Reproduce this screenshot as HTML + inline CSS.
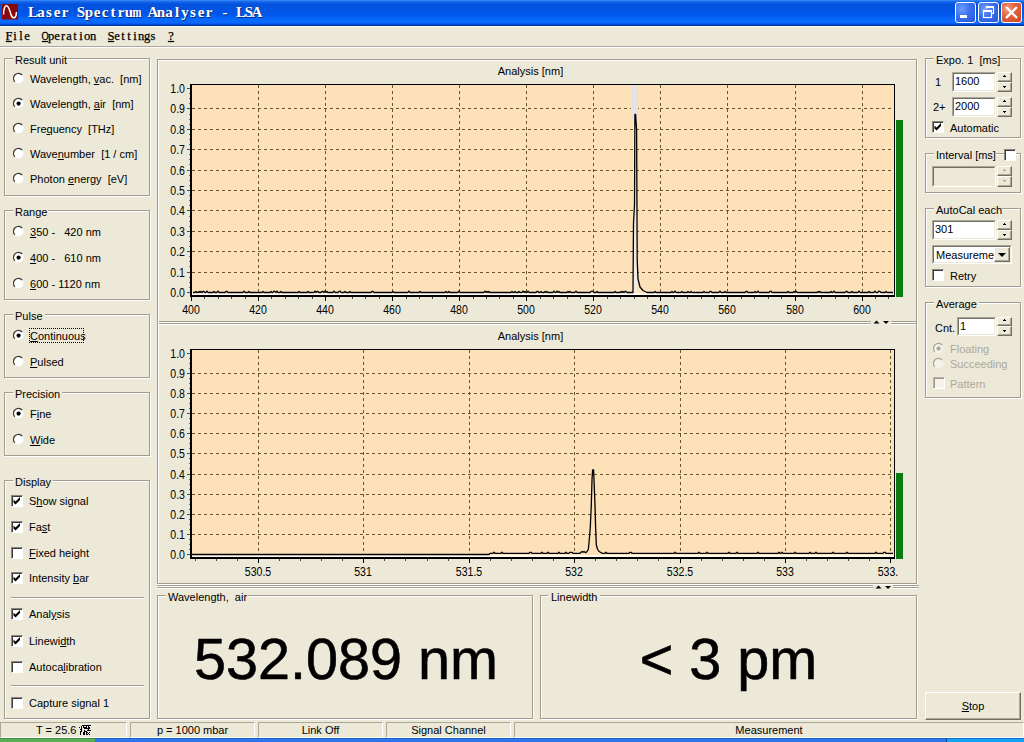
<!DOCTYPE html><html><head><meta charset="utf-8"><style>
html,body{margin:0;padding:0;width:1024px;height:742px;overflow:hidden;background:#ECE9D8;position:relative;font-family:"Liberation Sans",sans-serif}
</style></head><body>
<div style="position:absolute;left:0px;top:0px;width:1024px;height:26px;background:linear-gradient(to bottom,#3C8DF8 0px,#1A6AEF 1.5px,#0452DC 4px,#0054E3 10px,#0058EC 15px,#0868FC 19px,#0A6BFF 22px,#0858EC 24px,#003CB4 25px,#002C90 26px)"></div>
<div style="position:absolute;left:0px;top:26px;width:1024px;height:1px;background:#FBFBF6"></div>
<svg style="position:absolute;left:2px;top:4px" width="16" height="16" viewBox="0 0 16 16"><rect width="16" height="15.5" fill="#8a0a0c"/><path d="M1.6 10.5 C1.6 4, 3 1.8, 4.6 1.8 C6.5 1.8, 7.5 6, 8.8 10 C9.5 12.5, 10.5 14, 12 13.8 C13.6 13.5, 14.4 11, 14.4 8" fill="none" stroke="#fff" stroke-width="1.5"/></svg>
<svg style="position:absolute;left:0;top:0" width="300" height="26"><g font-family="Liberation Serif" font-weight="bold" font-size="15" text-anchor="middle"><text transform="translate(34 18) scale(1.0 1)" fill="#0a2a7a">L</text><text transform="translate(33 17) scale(1.0 1)" fill="#fff">L</text><text transform="translate(42 18) scale(1.0 1)" fill="#0a2a7a">a</text><text transform="translate(41 17) scale(1.0 1)" fill="#fff">a</text><text transform="translate(50 18) scale(1.0 1)" fill="#0a2a7a">s</text><text transform="translate(49 17) scale(1.0 1)" fill="#fff">s</text><text transform="translate(58 18) scale(1.0 1)" fill="#0a2a7a">e</text><text transform="translate(57 17) scale(1.0 1)" fill="#fff">e</text><text transform="translate(66 18) scale(1.0 1)" fill="#0a2a7a">r</text><text transform="translate(65 17) scale(1.0 1)" fill="#fff">r</text><text transform="translate(82 18) scale(1.0 1)" fill="#0a2a7a">S</text><text transform="translate(81 17) scale(1.0 1)" fill="#fff">S</text><text transform="translate(90 18) scale(1.0 1)" fill="#0a2a7a">p</text><text transform="translate(89 17) scale(1.0 1)" fill="#fff">p</text><text transform="translate(98 18) scale(1.0 1)" fill="#0a2a7a">e</text><text transform="translate(97 17) scale(1.0 1)" fill="#fff">e</text><text transform="translate(106 18) scale(1.0 1)" fill="#0a2a7a">c</text><text transform="translate(105 17) scale(1.0 1)" fill="#fff">c</text><text transform="translate(114 18) scale(1.0 1)" fill="#0a2a7a">t</text><text transform="translate(113 17) scale(1.0 1)" fill="#fff">t</text><text transform="translate(122 18) scale(1.0 1)" fill="#0a2a7a">r</text><text transform="translate(121 17) scale(1.0 1)" fill="#fff">r</text><text transform="translate(130 18) scale(1.0 1)" fill="#0a2a7a">u</text><text transform="translate(129 17) scale(1.0 1)" fill="#fff">u</text><text transform="translate(138 18) scale(0.72 1)" fill="#0a2a7a">m</text><text transform="translate(137 17) scale(0.72 1)" fill="#fff">m</text><text transform="translate(154 18) scale(1.0 1)" fill="#0a2a7a">A</text><text transform="translate(153 17) scale(1.0 1)" fill="#fff">A</text><text transform="translate(162 18) scale(1.0 1)" fill="#0a2a7a">n</text><text transform="translate(161 17) scale(1.0 1)" fill="#fff">n</text><text transform="translate(170 18) scale(1.0 1)" fill="#0a2a7a">a</text><text transform="translate(169 17) scale(1.0 1)" fill="#fff">a</text><text transform="translate(178 18) scale(1.0 1)" fill="#0a2a7a">l</text><text transform="translate(177 17) scale(1.0 1)" fill="#fff">l</text><text transform="translate(186 18) scale(1.0 1)" fill="#0a2a7a">y</text><text transform="translate(185 17) scale(1.0 1)" fill="#fff">y</text><text transform="translate(194 18) scale(1.0 1)" fill="#0a2a7a">s</text><text transform="translate(193 17) scale(1.0 1)" fill="#fff">s</text><text transform="translate(202 18) scale(1.0 1)" fill="#0a2a7a">e</text><text transform="translate(201 17) scale(1.0 1)" fill="#fff">e</text><text transform="translate(210 18) scale(1.0 1)" fill="#0a2a7a">r</text><text transform="translate(209 17) scale(1.0 1)" fill="#fff">r</text><text transform="translate(226 18) scale(1.0 1)" fill="#0a2a7a">-</text><text transform="translate(225 17) scale(1.0 1)" fill="#fff">-</text><text transform="translate(242 18) scale(1.0 1)" fill="#0a2a7a">L</text><text transform="translate(241 17) scale(1.0 1)" fill="#fff">L</text><text transform="translate(250 18) scale(1.0 1)" fill="#0a2a7a">S</text><text transform="translate(249 17) scale(1.0 1)" fill="#fff">S</text><text transform="translate(258 18) scale(1.0 1)" fill="#0a2a7a">A</text><text transform="translate(257 17) scale(1.0 1)" fill="#fff">A</text></g></svg>
<div style="position:absolute;left:955px;top:2px;width:21px;height:21px;box-sizing:border-box;border:1px solid #fff;border-radius:3px;background:radial-gradient(circle at 30% 30%,#6f9cf8 0%,#3a6ff0 45%,#2456d8 100%)"></div>
<div style="position:absolute;left:978px;top:2px;width:21px;height:21px;box-sizing:border-box;border:1px solid #fff;border-radius:3px;background:radial-gradient(circle at 30% 30%,#6f9cf8 0%,#3a6ff0 45%,#2456d8 100%)"></div>
<div style="position:absolute;left:1001px;top:2px;width:21px;height:21px;box-sizing:border-box;border:1px solid #fff;border-radius:3px;background:radial-gradient(circle at 30% 30%,#f29b7c 0%,#e0603c 45%,#cc4420 100%)"></div>
<svg style="position:absolute;left:955px;top:2px" width="21" height="21"><rect x="5" y="13" width="7" height="3" fill="#fff"/></svg>
<svg style="position:absolute;left:978px;top:2px" width="21" height="21"><rect x="5.5" y="8.5" width="8" height="7" fill="none" stroke="#fff" stroke-width="1.2"/><rect x="5" y="8" width="9" height="2" fill="#fff"/><path d="M8.5 6.5 V4.5 H15.5 V11.5 H13.5" fill="none" stroke="#fff" stroke-width="1.2"/><rect x="8" y="4" width="8" height="2" fill="#fff"/></svg>
<svg style="position:absolute;left:1001px;top:2px" width="21" height="21"><path d="M5 5 L16 16 M16 5 L5 16" stroke="#fff" stroke-width="2.4"/></svg>
<svg style="position:absolute;left:0;top:0" width="300" height="46"><g font-family="Liberation Serif" font-size="12.5" text-anchor="middle" fill="#000" stroke="#000" stroke-width="0.25"><text transform="translate(9 40) scale(1.0 1)">F</text><text transform="translate(15 40) scale(1.0 1)">i</text><text transform="translate(21 40) scale(1.0 1)">l</text><text transform="translate(27 40) scale(1.0 1)">e</text><rect x="6" y="41" width="6" height="1" fill="#000"/><text transform="translate(45 40) scale(0.8 1)">O</text><text transform="translate(51 40) scale(1.0 1)">p</text><text transform="translate(57 40) scale(1.0 1)">e</text><text transform="translate(63 40) scale(1.0 1)">r</text><text transform="translate(69 40) scale(1.0 1)">a</text><text transform="translate(75 40) scale(1.0 1)">t</text><text transform="translate(81 40) scale(1.0 1)">i</text><text transform="translate(87 40) scale(1.0 1)">o</text><text transform="translate(93 40) scale(1.0 1)">n</text><rect x="42" y="41" width="6" height="1" fill="#000"/><text transform="translate(111 40) scale(1.0 1)">S</text><text transform="translate(117 40) scale(1.0 1)">e</text><text transform="translate(123 40) scale(1.0 1)">t</text><text transform="translate(129 40) scale(1.0 1)">t</text><text transform="translate(135 40) scale(1.0 1)">i</text><text transform="translate(141 40) scale(1.0 1)">n</text><text transform="translate(147 40) scale(1.0 1)">g</text><text transform="translate(153 40) scale(1.0 1)">s</text><rect x="108" y="41" width="6" height="1" fill="#000"/><text transform="translate(171 40) scale(1.0 1)">?</text><rect x="168" y="41" width="6" height="1" fill="#000"/></g></svg>
<div style="position:absolute;left:0px;top:46px;width:1024px;height:1px;background:#aca899"></div>
<div style="position:absolute;left:0px;top:47px;width:1024px;height:1px;background:#fff"></div>
<div style="position:absolute;left:5px;top:59px;width:146px;height:138px;border:1px solid #fff;box-sizing:border-box"></div>
<div style="position:absolute;left:4px;top:58px;width:146px;height:138px;border:1px solid #A09D8E;box-sizing:border-box"></div>
<div style="position:absolute;left:13px;top:57px;width:55px;height:4px;background:#ECE9D8"></div>
<div style="position:absolute;left:15px;top:53px;font-size:11px;line-height:14px;font-family:'Liberation Sans', sans-serif;color:#000;white-space:pre;">Result unit</div>
<svg style="position:absolute;left:13px;top:72px" width="12" height="13" viewBox="0 0 12 13">
<circle cx="5.5" cy="6.5" r="5" fill="#fff"/>
<path d="M9.2 3.0 A5 5 0 0 0 1.8 9.9" fill="none" stroke="#3a3a3a" stroke-width="1.2"/>

</svg>
<div style="position:absolute;left:30px;top:72px;font-size:11px;line-height:14px;font-family:'Liberation Sans', sans-serif;color:#000;white-space:pre;">Wavelength, <u>v</u>ac.  [nm]</div>
<svg style="position:absolute;left:13px;top:97px" width="12" height="13" viewBox="0 0 12 13">
<circle cx="5.5" cy="6.5" r="5" fill="#fff"/>
<path d="M9.2 3.0 A5 5 0 0 0 1.8 9.9" fill="none" stroke="#3a3a3a" stroke-width="1.2"/>
<circle cx="5.6" cy="6.6" r="2.1" fill="#000"/>
</svg>
<div style="position:absolute;left:30px;top:97px;font-size:11px;line-height:14px;font-family:'Liberation Sans', sans-serif;color:#000;white-space:pre;">Wavelength, <u>a</u>ir  [nm]</div>
<svg style="position:absolute;left:13px;top:122px" width="12" height="13" viewBox="0 0 12 13">
<circle cx="5.5" cy="6.5" r="5" fill="#fff"/>
<path d="M9.2 3.0 A5 5 0 0 0 1.8 9.9" fill="none" stroke="#3a3a3a" stroke-width="1.2"/>

</svg>
<div style="position:absolute;left:30px;top:122px;font-size:11px;line-height:14px;font-family:'Liberation Sans', sans-serif;color:#000;white-space:pre;">Fre<u>q</u>uency  [THz]</div>
<svg style="position:absolute;left:13px;top:147px" width="12" height="13" viewBox="0 0 12 13">
<circle cx="5.5" cy="6.5" r="5" fill="#fff"/>
<path d="M9.2 3.0 A5 5 0 0 0 1.8 9.9" fill="none" stroke="#3a3a3a" stroke-width="1.2"/>

</svg>
<div style="position:absolute;left:30px;top:147px;font-size:11px;line-height:14px;font-family:'Liberation Sans', sans-serif;color:#000;white-space:pre;">Wave<u>n</u>umber  [1 / cm]</div>
<svg style="position:absolute;left:13px;top:172px" width="12" height="13" viewBox="0 0 12 13">
<circle cx="5.5" cy="6.5" r="5" fill="#fff"/>
<path d="M9.2 3.0 A5 5 0 0 0 1.8 9.9" fill="none" stroke="#3a3a3a" stroke-width="1.2"/>

</svg>
<div style="position:absolute;left:30px;top:172px;font-size:11px;line-height:14px;font-family:'Liberation Sans', sans-serif;color:#000;white-space:pre;">Photon <u>e</u>nergy  [eV]</div>
<div style="position:absolute;left:5px;top:211px;width:146px;height:90px;border:1px solid #fff;box-sizing:border-box"></div>
<div style="position:absolute;left:4px;top:210px;width:146px;height:90px;border:1px solid #A09D8E;box-sizing:border-box"></div>
<div style="position:absolute;left:13px;top:209px;width:35px;height:4px;background:#ECE9D8"></div>
<div style="position:absolute;left:15px;top:205px;font-size:11px;line-height:14px;font-family:'Liberation Sans', sans-serif;color:#000;white-space:pre;">Range</div>
<svg style="position:absolute;left:13px;top:225px" width="12" height="13" viewBox="0 0 12 13">
<circle cx="5.5" cy="6.5" r="5" fill="#fff"/>
<path d="M9.2 3.0 A5 5 0 0 0 1.8 9.9" fill="none" stroke="#3a3a3a" stroke-width="1.2"/>

</svg>
<div style="position:absolute;left:30px;top:225px;font-size:11px;line-height:14px;font-family:'Liberation Sans', sans-serif;color:#000;white-space:pre;"><u>3</u>50 -   420 nm</div>
<svg style="position:absolute;left:13px;top:251px" width="12" height="13" viewBox="0 0 12 13">
<circle cx="5.5" cy="6.5" r="5" fill="#fff"/>
<path d="M9.2 3.0 A5 5 0 0 0 1.8 9.9" fill="none" stroke="#3a3a3a" stroke-width="1.2"/>
<circle cx="5.6" cy="6.6" r="2.1" fill="#000"/>
</svg>
<div style="position:absolute;left:30px;top:251px;font-size:11px;line-height:14px;font-family:'Liberation Sans', sans-serif;color:#000;white-space:pre;"><u>4</u>00 -   610 nm</div>
<svg style="position:absolute;left:13px;top:277px" width="12" height="13" viewBox="0 0 12 13">
<circle cx="5.5" cy="6.5" r="5" fill="#fff"/>
<path d="M9.2 3.0 A5 5 0 0 0 1.8 9.9" fill="none" stroke="#3a3a3a" stroke-width="1.2"/>

</svg>
<div style="position:absolute;left:30px;top:277px;font-size:11px;line-height:14px;font-family:'Liberation Sans', sans-serif;color:#000;white-space:pre;"><u>6</u>00 - 1120 nm</div>
<div style="position:absolute;left:5px;top:315px;width:146px;height:64px;border:1px solid #fff;box-sizing:border-box"></div>
<div style="position:absolute;left:4px;top:314px;width:146px;height:64px;border:1px solid #A09D8E;box-sizing:border-box"></div>
<div style="position:absolute;left:13px;top:313px;width:32px;height:4px;background:#ECE9D8"></div>
<div style="position:absolute;left:15px;top:309px;font-size:11px;line-height:14px;font-family:'Liberation Sans', sans-serif;color:#000;white-space:pre;">Pulse</div>
<svg style="position:absolute;left:13px;top:329px" width="12" height="13" viewBox="0 0 12 13">
<circle cx="5.5" cy="6.5" r="5" fill="#fff"/>
<path d="M9.2 3.0 A5 5 0 0 0 1.8 9.9" fill="none" stroke="#3a3a3a" stroke-width="1.2"/>
<circle cx="5.6" cy="6.6" r="2.1" fill="#000"/>
</svg>
<div style="position:absolute;left:30px;top:329px;font-size:11px;line-height:14px;font-family:'Liberation Sans', sans-serif;color:#000;white-space:pre;"><u>C</u>ontinuous</div>
<div style="position:absolute;left:29px;top:328px;width:55px;height:15px;box-sizing:border-box;border:1px dotted #000"></div>
<svg style="position:absolute;left:13px;top:355px" width="12" height="13" viewBox="0 0 12 13">
<circle cx="5.5" cy="6.5" r="5" fill="#fff"/>
<path d="M9.2 3.0 A5 5 0 0 0 1.8 9.9" fill="none" stroke="#3a3a3a" stroke-width="1.2"/>

</svg>
<div style="position:absolute;left:30px;top:355px;font-size:11px;line-height:14px;font-family:'Liberation Sans', sans-serif;color:#000;white-space:pre;"><u>P</u>ulsed</div>
<div style="position:absolute;left:5px;top:393px;width:146px;height:64px;border:1px solid #fff;box-sizing:border-box"></div>
<div style="position:absolute;left:4px;top:392px;width:146px;height:64px;border:1px solid #A09D8E;box-sizing:border-box"></div>
<div style="position:absolute;left:13px;top:391px;width:49px;height:4px;background:#ECE9D8"></div>
<div style="position:absolute;left:15px;top:387px;font-size:11px;line-height:14px;font-family:'Liberation Sans', sans-serif;color:#000;white-space:pre;">Precision</div>
<svg style="position:absolute;left:13px;top:407px" width="12" height="13" viewBox="0 0 12 13">
<circle cx="5.5" cy="6.5" r="5" fill="#fff"/>
<path d="M9.2 3.0 A5 5 0 0 0 1.8 9.9" fill="none" stroke="#3a3a3a" stroke-width="1.2"/>
<circle cx="5.6" cy="6.6" r="2.1" fill="#000"/>
</svg>
<div style="position:absolute;left:30px;top:407px;font-size:11px;line-height:14px;font-family:'Liberation Sans', sans-serif;color:#000;white-space:pre;">F<u>i</u>ne</div>
<svg style="position:absolute;left:13px;top:433px" width="12" height="13" viewBox="0 0 12 13">
<circle cx="5.5" cy="6.5" r="5" fill="#fff"/>
<path d="M9.2 3.0 A5 5 0 0 0 1.8 9.9" fill="none" stroke="#3a3a3a" stroke-width="1.2"/>

</svg>
<div style="position:absolute;left:30px;top:433px;font-size:11px;line-height:14px;font-family:'Liberation Sans', sans-serif;color:#000;white-space:pre;"><u>W</u>ide</div>
<div style="position:absolute;left:5px;top:481px;width:146px;height:239px;border:1px solid #fff;box-sizing:border-box"></div>
<div style="position:absolute;left:4px;top:480px;width:146px;height:239px;border:1px solid #A09D8E;box-sizing:border-box"></div>
<div style="position:absolute;left:13px;top:479px;width:40px;height:4px;background:#ECE9D8"></div>
<div style="position:absolute;left:15px;top:475px;font-size:11px;line-height:14px;font-family:'Liberation Sans', sans-serif;color:#000;white-space:pre;">Display</div>
<div style="position:absolute;left:11px;top:495px;width:12px;height:12px;box-sizing:border-box;border-top:1px solid #8a877a;border-left:1px solid #8a877a;border-right:1px solid #fff;border-bottom:1px solid #fff"><div style="width:10px;height:10px;box-sizing:border-box;border-top:1px solid #3c3c3c;border-left:1px solid #3c3c3c;background:#fff"></div></div>
<svg style="position:absolute;left:11px;top:495px" width="12" height="12"><path d="M2.5 4.5 L4.5 6.5 L9 2 L9 5 L4.5 9.5 L2.5 7.5 Z" fill="#000"/></svg>
<div style="position:absolute;left:29px;top:494px;font-size:11px;line-height:14px;font-family:'Liberation Sans', sans-serif;color:#000;white-space:pre;">S<u>h</u>ow signal</div>
<div style="position:absolute;left:11px;top:521px;width:12px;height:12px;box-sizing:border-box;border-top:1px solid #8a877a;border-left:1px solid #8a877a;border-right:1px solid #fff;border-bottom:1px solid #fff"><div style="width:10px;height:10px;box-sizing:border-box;border-top:1px solid #3c3c3c;border-left:1px solid #3c3c3c;background:#fff"></div></div>
<svg style="position:absolute;left:11px;top:521px" width="12" height="12"><path d="M2.5 4.5 L4.5 6.5 L9 2 L9 5 L4.5 9.5 L2.5 7.5 Z" fill="#000"/></svg>
<div style="position:absolute;left:29px;top:520px;font-size:11px;line-height:14px;font-family:'Liberation Sans', sans-serif;color:#000;white-space:pre;">Fa<u>s</u>t</div>
<div style="position:absolute;left:11px;top:547px;width:12px;height:12px;box-sizing:border-box;border-top:1px solid #8a877a;border-left:1px solid #8a877a;border-right:1px solid #fff;border-bottom:1px solid #fff"><div style="width:10px;height:10px;box-sizing:border-box;border-top:1px solid #3c3c3c;border-left:1px solid #3c3c3c;background:#fff"></div></div>
<div style="position:absolute;left:29px;top:546px;font-size:11px;line-height:14px;font-family:'Liberation Sans', sans-serif;color:#000;white-space:pre;"><u>F</u>ixed height</div>
<div style="position:absolute;left:11px;top:572px;width:12px;height:12px;box-sizing:border-box;border-top:1px solid #8a877a;border-left:1px solid #8a877a;border-right:1px solid #fff;border-bottom:1px solid #fff"><div style="width:10px;height:10px;box-sizing:border-box;border-top:1px solid #3c3c3c;border-left:1px solid #3c3c3c;background:#fff"></div></div>
<svg style="position:absolute;left:11px;top:572px" width="12" height="12"><path d="M2.5 4.5 L4.5 6.5 L9 2 L9 5 L4.5 9.5 L2.5 7.5 Z" fill="#000"/></svg>
<div style="position:absolute;left:29px;top:571px;font-size:11px;line-height:14px;font-family:'Liberation Sans', sans-serif;color:#000;white-space:pre;">Intensity <u>b</u>ar</div>
<div style="position:absolute;left:11px;top:608px;width:12px;height:12px;box-sizing:border-box;border-top:1px solid #8a877a;border-left:1px solid #8a877a;border-right:1px solid #fff;border-bottom:1px solid #fff"><div style="width:10px;height:10px;box-sizing:border-box;border-top:1px solid #3c3c3c;border-left:1px solid #3c3c3c;background:#fff"></div></div>
<svg style="position:absolute;left:11px;top:608px" width="12" height="12"><path d="M2.5 4.5 L4.5 6.5 L9 2 L9 5 L4.5 9.5 L2.5 7.5 Z" fill="#000"/></svg>
<div style="position:absolute;left:29px;top:607px;font-size:11px;line-height:14px;font-family:'Liberation Sans', sans-serif;color:#000;white-space:pre;">Anal<u>y</u>sis</div>
<div style="position:absolute;left:11px;top:635px;width:12px;height:12px;box-sizing:border-box;border-top:1px solid #8a877a;border-left:1px solid #8a877a;border-right:1px solid #fff;border-bottom:1px solid #fff"><div style="width:10px;height:10px;box-sizing:border-box;border-top:1px solid #3c3c3c;border-left:1px solid #3c3c3c;background:#fff"></div></div>
<svg style="position:absolute;left:11px;top:635px" width="12" height="12"><path d="M2.5 4.5 L4.5 6.5 L9 2 L9 5 L4.5 9.5 L2.5 7.5 Z" fill="#000"/></svg>
<div style="position:absolute;left:29px;top:634px;font-size:11px;line-height:14px;font-family:'Liberation Sans', sans-serif;color:#000;white-space:pre;">Linewi<u>d</u>th</div>
<div style="position:absolute;left:11px;top:661px;width:12px;height:12px;box-sizing:border-box;border-top:1px solid #8a877a;border-left:1px solid #8a877a;border-right:1px solid #fff;border-bottom:1px solid #fff"><div style="width:10px;height:10px;box-sizing:border-box;border-top:1px solid #3c3c3c;border-left:1px solid #3c3c3c;background:#fff"></div></div>
<div style="position:absolute;left:29px;top:660px;font-size:11px;line-height:14px;font-family:'Liberation Sans', sans-serif;color:#000;white-space:pre;">Autoca<u>l</u>ibration</div>
<div style="position:absolute;left:11px;top:697px;width:12px;height:12px;box-sizing:border-box;border-top:1px solid #8a877a;border-left:1px solid #8a877a;border-right:1px solid #fff;border-bottom:1px solid #fff"><div style="width:10px;height:10px;box-sizing:border-box;border-top:1px solid #3c3c3c;border-left:1px solid #3c3c3c;background:#fff"></div></div>
<div style="position:absolute;left:29px;top:696px;font-size:11px;line-height:14px;font-family:'Liberation Sans', sans-serif;color:#000;white-space:pre;">Capture signal 1</div>
<div style="position:absolute;left:11px;top:597px;width:133px;height:1px;background:#A09D8E"></div>
<div style="position:absolute;left:11px;top:598px;width:133px;height:1px;background:#fff"></div>
<div style="position:absolute;left:11px;top:685px;width:133px;height:1px;background:#A09D8E"></div>
<div style="position:absolute;left:11px;top:686px;width:133px;height:1px;background:#fff"></div>
<div style="position:absolute;left:157px;top:59px;width:1px;height:525px;background:#A09D8E"></div>
<div style="position:absolute;left:157px;top:59px;width:760px;height:1px;background:#A09D8E"></div>
<div style="position:absolute;left:158px;top:60px;width:1px;height:523px;background:#fff"></div>
<div style="position:absolute;left:158px;top:60px;width:758px;height:1px;background:#fff"></div>
<div style="position:absolute;left:916px;top:59px;width:1px;height:525px;background:#A09D8E"></div>
<div style="position:absolute;left:917px;top:59px;width:1px;height:526px;background:#fff"></div>
<div style="position:absolute;left:159px;top:321px;width:712px;height:1px;background:#A09D8E"></div>
<div style="position:absolute;left:891px;top:321px;width:25px;height:1px;background:#A09D8E"></div>
<div style="position:absolute;left:159px;top:322px;width:712px;height:1px;background:#fff"></div>
<div style="position:absolute;left:891px;top:322px;width:25px;height:1px;background:#fff"></div>
<div style="position:absolute;left:159px;top:323px;width:712px;height:1px;background:#A09D8E"></div>
<div style="position:absolute;left:891px;top:323px;width:25px;height:1px;background:#A09D8E"></div>
<div style="position:absolute;left:159px;top:324px;width:712px;height:1px;background:#fff"></div>
<div style="position:absolute;left:891px;top:324px;width:25px;height:1px;background:#fff"></div>
<svg style="position:absolute;left:872px;top:319px" width="20" height="8"><path d="M1.5 4.5 L4.5 1.5 L7.5 4.5 Z" fill="#000"/><path d="M11 2 L17 2 L14 5 Z" fill="#000"/></svg>
<div style="position:absolute;left:157px;top:583px;width:759px;height:1px;background:#A09D8E"></div>
<div style="position:absolute;left:157px;top:584px;width:759px;height:1px;background:#fff"></div>
<div style="position:absolute;left:157px;top:585px;width:716px;height:1px;background:#A09D8E"></div>
<div style="position:absolute;left:893px;top:585px;width:26px;height:1px;background:#A09D8E"></div>
<div style="position:absolute;left:157px;top:586px;width:716px;height:1px;background:#fff"></div>
<div style="position:absolute;left:893px;top:586px;width:26px;height:1px;background:#fff"></div>
<div style="position:absolute;left:157px;top:587px;width:716px;height:1px;background:#A09D8E"></div>
<div style="position:absolute;left:893px;top:587px;width:26px;height:1px;background:#A09D8E"></div>
<div style="position:absolute;left:157px;top:588px;width:716px;height:1px;background:#fff"></div>
<div style="position:absolute;left:893px;top:588px;width:26px;height:1px;background:#fff"></div>
<svg style="position:absolute;left:874px;top:584px" width="20" height="8"><path d="M1.5 4.5 L4.5 1.5 L7.5 4.5 Z" fill="#000"/><path d="M11 2 L17 2 L14 5 Z" fill="#000"/></svg>
<svg style="position:absolute;left:0;top:0" width="1024" height="742"><rect x="190" y="84" width="705" height="211" fill="#FDE2B9"/><rect x="192" y="293" width="702" height="2" fill="#fffaf0"/><line x1="192" y1="272.5" x2="894" y2="272.5" stroke="#6a5436" stroke-width="1" stroke-dasharray="3 3"/><line x1="192" y1="251.5" x2="894" y2="251.5" stroke="#6a5436" stroke-width="1" stroke-dasharray="3 3"/><line x1="192" y1="231.5" x2="894" y2="231.5" stroke="#6a5436" stroke-width="1" stroke-dasharray="3 3"/><line x1="192" y1="210.5" x2="894" y2="210.5" stroke="#6a5436" stroke-width="1" stroke-dasharray="3 3"/><line x1="192" y1="190.5" x2="894" y2="190.5" stroke="#6a5436" stroke-width="1" stroke-dasharray="3 3"/><line x1="192" y1="170.5" x2="894" y2="170.5" stroke="#6a5436" stroke-width="1" stroke-dasharray="3 3"/><line x1="192" y1="149.5" x2="894" y2="149.5" stroke="#6a5436" stroke-width="1" stroke-dasharray="3 3"/><line x1="192" y1="129.5" x2="894" y2="129.5" stroke="#6a5436" stroke-width="1" stroke-dasharray="3 3"/><line x1="192" y1="108.5" x2="894" y2="108.5" stroke="#6a5436" stroke-width="1" stroke-dasharray="3 3"/><line x1="258.5" y1="85" x2="258.5" y2="292" stroke="#6a5436" stroke-width="1" stroke-dasharray="3 3"/><line x1="325.5" y1="85" x2="325.5" y2="292" stroke="#6a5436" stroke-width="1" stroke-dasharray="3 3"/><line x1="392.5" y1="85" x2="392.5" y2="292" stroke="#6a5436" stroke-width="1" stroke-dasharray="3 3"/><line x1="459.5" y1="85" x2="459.5" y2="292" stroke="#6a5436" stroke-width="1" stroke-dasharray="3 3"/><line x1="526.5" y1="85" x2="526.5" y2="292" stroke="#6a5436" stroke-width="1" stroke-dasharray="3 3"/><line x1="593.5" y1="85" x2="593.5" y2="292" stroke="#6a5436" stroke-width="1" stroke-dasharray="3 3"/><line x1="660.5" y1="85" x2="660.5" y2="292" stroke="#6a5436" stroke-width="1" stroke-dasharray="3 3"/><line x1="727.5" y1="85" x2="727.5" y2="292" stroke="#6a5436" stroke-width="1" stroke-dasharray="3 3"/><line x1="795.5" y1="85" x2="795.5" y2="292" stroke="#6a5436" stroke-width="1" stroke-dasharray="3 3"/><line x1="862.5" y1="85" x2="862.5" y2="292" stroke="#6a5436" stroke-width="1" stroke-dasharray="3 3"/><rect x="631" y="85" width="7" height="34" fill="#ece2d8"/><rect x="632" y="85" width="5" height="34" fill="#e4e0e2"/><rect x="633" y="85" width="3" height="34" fill="#e6e4ea"/><rect x="633" y="118" width="4" height="174" fill="#f2ebe6"/><path d="M193.0 292.5 L194.0 292.5 L195.0 292.5 L196.0 291.5 L197.0 292.5 L198.0 292.5 L199.0 291.5 L200.0 292.5 L201.0 291.5 L202.0 292.5 L203.0 291.5 L204.0 291.5 L205.0 292.5 L206.0 292.5 L207.0 291.0 L208.0 292.5 L209.0 292.5 L210.0 292.5 L211.0 292.5 L212.0 292.5 L213.0 292.5 L214.0 291.5 L215.0 292.5 L216.0 292.5 L217.0 292.5 L218.0 291.0 L219.0 292.5 L220.0 292.5 L221.0 292.5 L222.0 292.5 L223.0 292.5 L224.0 292.5 L225.0 292.5 L226.0 291.5 L227.0 291.5 L228.0 292.5 L229.0 292.5 L230.0 292.5 L231.0 292.5 L232.0 292.5 L233.0 292.5 L234.0 292.5 L235.0 292.5 L236.0 292.5 L237.0 292.5 L238.0 292.5 L239.0 292.5 L240.0 292.5 L241.0 292.5 L242.0 292.5 L243.0 292.5 L244.0 291.0 L245.0 292.5 L246.0 292.5 L247.0 292.5 L248.0 292.5 L249.0 291.5 L250.0 292.5 L251.0 292.5 L252.0 292.5 L253.0 292.5 L254.0 292.5 L255.0 292.5 L256.0 292.5 L257.0 292.5 L258.0 292.5 L259.0 292.5 L260.0 292.5 L261.0 292.5 L262.0 292.5 L263.0 291.5 L264.0 292.5 L265.0 292.5 L266.0 292.5 L267.0 292.5 L268.0 292.5 L269.0 292.5 L270.0 292.5 L271.0 291.5 L272.0 292.5 L273.0 292.5 L274.0 291.0 L275.0 291.5 L276.0 292.5 L277.0 291.0 L278.0 292.5 L279.0 292.5 L280.0 292.5 L281.0 291.5 L282.0 292.5 L283.0 292.5 L284.0 292.5 L285.0 292.5 L286.0 292.5 L287.0 292.5 L288.0 292.5 L289.0 292.5 L290.0 292.5 L291.0 292.5 L292.0 292.5 L293.0 292.5 L294.0 292.5 L295.0 292.5 L296.0 292.5 L297.0 292.5 L298.0 292.5 L299.0 291.5 L300.0 292.5 L301.0 292.5 L302.0 292.5 L303.0 292.5 L304.0 292.5 L305.0 292.5 L306.0 292.5 L307.0 292.5 L308.0 291.5 L309.0 292.5 L310.0 292.5 L311.0 292.5 L312.0 292.5 L313.0 292.5 L314.0 292.5 L315.0 291.0 L316.0 292.5 L317.0 291.5 L318.0 291.5 L319.0 292.5 L320.0 292.5 L321.0 292.5 L322.0 291.5 L323.0 291.5 L324.0 292.5 L325.0 291.0 L326.0 292.5 L327.0 291.5 L328.0 292.5 L329.0 292.5 L330.0 292.5 L331.0 292.5 L332.0 292.5 L333.0 292.5 L334.0 291.0 L335.0 292.5 L336.0 292.5 L337.0 292.5 L338.0 292.5 L339.0 291.5 L340.0 291.0 L341.0 292.5 L342.0 292.5 L343.0 292.5 L344.0 292.5 L345.0 291.5 L346.0 292.5 L347.0 292.5 L348.0 292.5 L349.0 292.5 L350.0 291.5 L351.0 292.5 L352.0 292.5 L353.0 292.5 L354.0 292.5 L355.0 292.5 L356.0 292.5 L357.0 292.5 L358.0 292.5 L359.0 292.5 L360.0 292.5 L361.0 292.5 L362.0 292.5 L363.0 292.5 L364.0 292.5 L365.0 292.5 L366.0 292.5 L367.0 292.5 L368.0 292.5 L369.0 292.5 L370.0 292.5 L371.0 292.5 L372.0 291.5 L373.0 291.5 L374.0 292.5 L375.0 292.5 L376.0 292.5 L377.0 292.5 L378.0 292.5 L379.0 292.5 L380.0 292.5 L381.0 292.5 L382.0 292.5 L383.0 292.5 L384.0 292.5 L385.0 292.5 L386.0 292.5 L387.0 292.5 L388.0 292.5 L389.0 292.5 L390.0 292.5 L391.0 292.5 L392.0 292.5 L393.0 291.5 L394.0 292.5 L395.0 292.5 L396.0 292.5 L397.0 292.5 L398.0 292.5 L399.0 292.5 L400.0 292.5 L401.0 292.5 L402.0 292.5 L403.0 292.5 L404.0 292.5 L405.0 292.5 L406.0 292.5 L407.0 292.5 L408.0 292.5 L409.0 291.0 L410.0 292.5 L411.0 292.5 L412.0 292.5 L413.0 292.5 L414.0 292.5 L415.0 292.5 L416.0 292.5 L417.0 292.5 L418.0 292.5 L419.0 292.5 L420.0 291.5 L421.0 292.5 L422.0 292.5 L423.0 292.5 L424.0 292.5 L425.0 292.5 L426.0 292.5 L427.0 292.5 L428.0 292.5 L429.0 292.5 L430.0 292.5 L431.0 292.5 L432.0 292.5 L433.0 292.5 L434.0 292.5 L435.0 292.5 L436.0 292.5 L437.0 292.5 L438.0 292.5 L439.0 292.5 L440.0 292.5 L441.0 292.5 L442.0 292.5 L443.0 292.5 L444.0 292.5 L445.0 292.5 L446.0 291.5 L447.0 292.5 L448.0 292.5 L449.0 291.5 L450.0 292.5 L451.0 292.5 L452.0 292.5 L453.0 292.5 L454.0 292.5 L455.0 292.5 L456.0 292.5 L457.0 292.5 L458.0 292.5 L459.0 291.0 L460.0 292.5 L461.0 292.5 L462.0 292.5 L463.0 292.5 L464.0 292.5 L465.0 292.5 L466.0 292.5 L467.0 292.5 L468.0 292.5 L469.0 292.5 L470.0 292.5 L471.0 292.5 L472.0 292.5 L473.0 292.5 L474.0 292.5 L475.0 292.5 L476.0 292.5 L477.0 292.5 L478.0 292.5 L479.0 292.5 L480.0 292.5 L481.0 292.5 L482.0 292.5 L483.0 292.5 L484.0 292.5 L485.0 291.0 L486.0 292.5 L487.0 291.5 L488.0 292.5 L489.0 291.5 L490.0 292.5 L491.0 292.5 L492.0 292.5 L493.0 292.5 L494.0 292.5 L495.0 292.5 L496.0 292.5 L497.0 292.5 L498.0 292.5 L499.0 292.5 L500.0 292.5 L501.0 292.5 L502.0 292.5 L503.0 292.5 L504.0 292.5 L505.0 292.5 L506.0 292.5 L507.0 292.5 L508.0 292.5 L509.0 292.5 L510.0 292.5 L511.0 292.5 L512.0 291.5 L513.0 292.5 L514.0 292.5 L515.0 291.5 L516.0 292.5 L517.0 292.5 L518.0 292.5 L519.0 291.5 L520.0 292.5 L521.0 292.5 L522.0 292.5 L523.0 291.0 L524.0 292.5 L525.0 291.5 L526.0 292.5 L527.0 292.5 L528.0 291.0 L529.0 292.5 L530.0 292.5 L531.0 292.5 L532.0 292.5 L533.0 292.5 L534.0 292.5 L535.0 292.5 L536.0 292.5 L537.0 291.5 L538.0 291.5 L539.0 292.5 L540.0 292.5 L541.0 291.5 L542.0 292.5 L543.0 292.5 L544.0 292.5 L545.0 291.5 L546.0 292.5 L547.0 291.5 L548.0 292.5 L549.0 292.5 L550.0 292.5 L551.0 292.5 L552.0 292.5 L553.0 292.5 L554.0 291.0 L555.0 292.5 L556.0 292.5 L557.0 291.0 L558.0 292.5 L559.0 291.5 L560.0 292.5 L561.0 292.5 L562.0 292.5 L563.0 292.5 L564.0 292.5 L565.0 292.5 L566.0 292.5 L567.0 292.5 L568.0 291.5 L569.0 292.5 L570.0 291.5 L571.0 292.5 L572.0 292.5 L573.0 292.5 L574.0 292.5 L575.0 292.5 L576.0 291.0 L577.0 292.5 L578.0 292.5 L579.0 292.5 L580.0 292.5 L581.0 292.5 L582.0 292.5 L583.0 292.5 L584.0 292.5 L585.0 292.5 L586.0 292.5 L587.0 292.5 L588.0 292.5 L589.0 292.5 L590.0 292.5 L591.0 291.5 L592.0 291.0 L593.0 291.5 L594.0 292.5 L595.0 292.5 L596.0 292.5 L597.0 291.5 L598.0 292.5 L599.0 292.5 L600.0 292.5 L601.0 292.5 L602.0 292.5 L603.0 292.5 L604.0 292.5 L605.0 292.5 L606.0 292.5 L607.0 292.5 L608.0 292.5 L609.0 292.5 L610.0 292.5 L611.0 292.5 L612.0 292.5 L613.0 292.5 L614.0 292.5 L615.0 291.5 L616.0 292.5 L617.0 292.5 L618.0 292.5 L619.0 292.5 L620.0 292.5 L621.0 291.5 L622.0 292.5 L623.0 291.5 L624.0 292.5 L625.0 291.5 L626.0 291.5 L627.0 292.5 L628.0 292.5 L629.0 292.5 L630.0 292.5 L631.0 292.5 L632.0 292.5 L633.0 292.5 L633.5 223.0 L634.5 205.0 L634.9 114.5 L635.6 114.5 L636.6 130.0 L637.2 260.0 L638.0 279.0 L640.0 287.0 L643.0 290.5 L646.0 292.0 L647.0 292.5 L648.0 292.5 L649.0 292.5 L650.0 292.5 L651.0 292.5 L652.0 292.5 L653.0 292.5 L654.0 292.5 L655.0 291.5 L656.0 292.5 L657.0 292.5 L658.0 292.5 L659.0 292.5 L660.0 292.5 L661.0 292.5 L662.0 292.5 L663.0 292.5 L664.0 292.5 L665.0 292.5 L666.0 292.5 L667.0 292.5 L668.0 292.5 L669.0 292.5 L670.0 292.5 L671.0 292.5 L672.0 291.5 L673.0 292.5 L674.0 292.5 L675.0 291.0 L676.0 292.5 L677.0 292.5 L678.0 292.5 L679.0 292.5 L680.0 292.5 L681.0 292.5 L682.0 291.5 L683.0 292.5 L684.0 292.5 L685.0 292.5 L686.0 292.5 L687.0 292.5 L688.0 291.5 L689.0 292.5 L690.0 292.5 L691.0 291.5 L692.0 292.5 L693.0 292.5 L694.0 292.5 L695.0 292.5 L696.0 292.5 L697.0 292.5 L698.0 292.5 L699.0 292.5 L700.0 292.5 L701.0 292.5 L702.0 292.5 L703.0 292.5 L704.0 291.5 L705.0 292.5 L706.0 292.5 L707.0 292.5 L708.0 292.5 L709.0 292.5 L710.0 291.5 L711.0 291.5 L712.0 292.5 L713.0 292.5 L714.0 292.5 L715.0 292.5 L716.0 292.5 L717.0 292.5 L718.0 292.5 L719.0 292.5 L720.0 291.0 L721.0 292.5 L722.0 292.5 L723.0 292.5 L724.0 292.5 L725.0 291.5 L726.0 292.5 L727.0 292.5 L728.0 292.5 L729.0 292.5 L730.0 292.5 L731.0 292.5 L732.0 292.5 L733.0 292.5 L734.0 292.5 L735.0 292.5 L736.0 292.5 L737.0 292.5 L738.0 292.5 L739.0 292.5 L740.0 292.5 L741.0 292.5 L742.0 292.5 L743.0 292.5 L744.0 292.5 L745.0 292.5 L746.0 291.5 L747.0 291.5 L748.0 292.5 L749.0 292.5 L750.0 292.5 L751.0 292.5 L752.0 292.5 L753.0 292.5 L754.0 292.5 L755.0 291.5 L756.0 292.5 L757.0 292.5 L758.0 291.0 L759.0 292.5 L760.0 292.5 L761.0 292.5 L762.0 292.5 L763.0 292.5 L764.0 292.5 L765.0 292.5 L766.0 292.5 L767.0 292.5 L768.0 292.5 L769.0 292.5 L770.0 291.5 L771.0 291.0 L772.0 292.5 L773.0 292.5 L774.0 292.5 L775.0 292.5 L776.0 292.5 L777.0 292.5 L778.0 292.5 L779.0 292.5 L780.0 292.5 L781.0 292.5 L782.0 292.5 L783.0 292.5 L784.0 292.5 L785.0 292.5 L786.0 292.5 L787.0 292.5 L788.0 291.5 L789.0 292.5 L790.0 292.5 L791.0 292.5 L792.0 292.5 L793.0 292.5 L794.0 291.5 L795.0 292.5 L796.0 291.0 L797.0 292.5 L798.0 292.5 L799.0 292.5 L800.0 292.5 L801.0 292.5 L802.0 292.5 L803.0 292.5 L804.0 292.5 L805.0 292.5 L806.0 292.5 L807.0 292.5 L808.0 292.5 L809.0 292.5 L810.0 292.5 L811.0 292.5 L812.0 292.5 L813.0 292.5 L814.0 292.5 L815.0 292.5 L816.0 292.5 L817.0 292.5 L818.0 291.5 L819.0 292.5 L820.0 291.5 L821.0 292.5 L822.0 292.5 L823.0 292.5 L824.0 292.5 L825.0 292.5 L826.0 292.5 L827.0 292.5 L828.0 292.5 L829.0 292.5 L830.0 292.5 L831.0 291.5 L832.0 292.5 L833.0 292.5 L834.0 291.0 L835.0 292.5 L836.0 292.5 L837.0 292.5 L838.0 292.5 L839.0 292.5 L840.0 292.5 L841.0 292.5 L842.0 292.5 L843.0 292.5 L844.0 292.5 L845.0 292.5 L846.0 291.5 L847.0 291.5 L848.0 292.5 L849.0 292.5 L850.0 292.5 L851.0 292.5 L852.0 291.5 L853.0 292.5 L854.0 292.5 L855.0 292.5 L856.0 292.5 L857.0 292.5 L858.0 292.5 L859.0 291.0 L860.0 292.5 L861.0 292.5 L862.0 292.5 L863.0 292.5 L864.0 292.5 L865.0 292.5 L866.0 292.5 L867.0 292.5 L868.0 292.5 L869.0 291.5 L870.0 292.5 L871.0 292.5 L872.0 292.5 L873.0 292.5 L874.0 292.5 L875.0 291.0 L876.0 292.5 L877.0 292.5 L878.0 292.5 L879.0 291.0 L880.0 291.5 L881.0 292.5 L882.0 292.5 L883.0 292.5 L884.0 292.5 L885.0 292.5 L886.0 291.5 L887.0 292.5 L888.0 292.5 L889.0 292.5 L890.0 292.5 L891.0 292.5 L892.0 292.5 L893.0 292.5" fill="none" stroke="#000" stroke-width="1.3" stroke-linejoin="round"/><rect x="190" y="84" width="705" height="1" fill="#000"/><rect x="894" y="84" width="1" height="211" fill="#000"/><rect x="190" y="84" width="2" height="213" fill="#000"/><rect x="190" y="295" width="705" height="2" fill="#000"/><rect x="187" y="292" width="3" height="1" fill="#444"/><rect x="187" y="272" width="3" height="1" fill="#444"/><rect x="187" y="251" width="3" height="1" fill="#444"/><rect x="187" y="231" width="3" height="1" fill="#444"/><rect x="187" y="210" width="3" height="1" fill="#444"/><rect x="187" y="190" width="3" height="1" fill="#444"/><rect x="187" y="170" width="3" height="1" fill="#444"/><rect x="187" y="149" width="3" height="1" fill="#444"/><rect x="187" y="129" width="3" height="1" fill="#444"/><rect x="187" y="108" width="3" height="1" fill="#444"/><rect x="187" y="88" width="3" height="1" fill="#444"/><rect x="189" y="292" width="1" height="1" fill="#666"/><rect x="189" y="287" width="1" height="1" fill="#666"/><rect x="189" y="282" width="1" height="1" fill="#666"/><rect x="189" y="277" width="1" height="1" fill="#666"/><rect x="189" y="272" width="1" height="1" fill="#666"/><rect x="189" y="266" width="1" height="1" fill="#666"/><rect x="189" y="261" width="1" height="1" fill="#666"/><rect x="189" y="256" width="1" height="1" fill="#666"/><rect x="189" y="251" width="1" height="1" fill="#666"/><rect x="189" y="246" width="1" height="1" fill="#666"/><rect x="189" y="241" width="1" height="1" fill="#666"/><rect x="189" y="236" width="1" height="1" fill="#666"/><rect x="189" y="231" width="1" height="1" fill="#666"/><rect x="189" y="226" width="1" height="1" fill="#666"/><rect x="189" y="221" width="1" height="1" fill="#666"/><rect x="189" y="216" width="1" height="1" fill="#666"/><rect x="189" y="210" width="1" height="1" fill="#666"/><rect x="189" y="205" width="1" height="1" fill="#666"/><rect x="189" y="200" width="1" height="1" fill="#666"/><rect x="189" y="195" width="1" height="1" fill="#666"/><rect x="189" y="190" width="1" height="1" fill="#666"/><rect x="189" y="185" width="1" height="1" fill="#666"/><rect x="189" y="180" width="1" height="1" fill="#666"/><rect x="189" y="175" width="1" height="1" fill="#666"/><rect x="189" y="170" width="1" height="1" fill="#666"/><rect x="189" y="164" width="1" height="1" fill="#666"/><rect x="189" y="159" width="1" height="1" fill="#666"/><rect x="189" y="154" width="1" height="1" fill="#666"/><rect x="189" y="149" width="1" height="1" fill="#666"/><rect x="189" y="144" width="1" height="1" fill="#666"/><rect x="189" y="139" width="1" height="1" fill="#666"/><rect x="189" y="134" width="1" height="1" fill="#666"/><rect x="189" y="129" width="1" height="1" fill="#666"/><rect x="189" y="124" width="1" height="1" fill="#666"/><rect x="189" y="119" width="1" height="1" fill="#666"/><rect x="189" y="114" width="1" height="1" fill="#666"/><rect x="189" y="108" width="1" height="1" fill="#666"/><rect x="189" y="103" width="1" height="1" fill="#666"/><rect x="189" y="98" width="1" height="1" fill="#666"/><rect x="189" y="93" width="1" height="1" fill="#666"/><rect x="189" y="88" width="1" height="1" fill="#666"/><rect x="191" y="297" width="1" height="2" fill="#444"/><rect x="204" y="297" width="1" height="2" fill="#444"/><rect x="218" y="297" width="1" height="2" fill="#444"/><rect x="231" y="297" width="1" height="2" fill="#444"/><rect x="245" y="297" width="1" height="2" fill="#444"/><rect x="258" y="297" width="1" height="2" fill="#444"/><rect x="271" y="297" width="1" height="2" fill="#444"/><rect x="285" y="297" width="1" height="2" fill="#444"/><rect x="298" y="297" width="1" height="2" fill="#444"/><rect x="312" y="297" width="1" height="2" fill="#444"/><rect x="325" y="297" width="1" height="2" fill="#444"/><rect x="339" y="297" width="1" height="2" fill="#444"/><rect x="352" y="297" width="1" height="2" fill="#444"/><rect x="365" y="297" width="1" height="2" fill="#444"/><rect x="379" y="297" width="1" height="2" fill="#444"/><rect x="392" y="297" width="1" height="2" fill="#444"/><rect x="406" y="297" width="1" height="2" fill="#444"/><rect x="419" y="297" width="1" height="2" fill="#444"/><rect x="432" y="297" width="1" height="2" fill="#444"/><rect x="446" y="297" width="1" height="2" fill="#444"/><rect x="459" y="297" width="1" height="2" fill="#444"/><rect x="473" y="297" width="1" height="2" fill="#444"/><rect x="486" y="297" width="1" height="2" fill="#444"/><rect x="499" y="297" width="1" height="2" fill="#444"/><rect x="513" y="297" width="1" height="2" fill="#444"/><rect x="526" y="297" width="1" height="2" fill="#444"/><rect x="540" y="297" width="1" height="2" fill="#444"/><rect x="553" y="297" width="1" height="2" fill="#444"/><rect x="567" y="297" width="1" height="2" fill="#444"/><rect x="580" y="297" width="1" height="2" fill="#444"/><rect x="593" y="297" width="1" height="2" fill="#444"/><rect x="607" y="297" width="1" height="2" fill="#444"/><rect x="620" y="297" width="1" height="2" fill="#444"/><rect x="634" y="297" width="1" height="2" fill="#444"/><rect x="647" y="297" width="1" height="2" fill="#444"/><rect x="660" y="297" width="1" height="2" fill="#444"/><rect x="674" y="297" width="1" height="2" fill="#444"/><rect x="687" y="297" width="1" height="2" fill="#444"/><rect x="701" y="297" width="1" height="2" fill="#444"/><rect x="714" y="297" width="1" height="2" fill="#444"/><rect x="727" y="297" width="1" height="2" fill="#444"/><rect x="741" y="297" width="1" height="2" fill="#444"/><rect x="754" y="297" width="1" height="2" fill="#444"/><rect x="768" y="297" width="1" height="2" fill="#444"/><rect x="781" y="297" width="1" height="2" fill="#444"/><rect x="795" y="297" width="1" height="2" fill="#444"/><rect x="808" y="297" width="1" height="2" fill="#444"/><rect x="821" y="297" width="1" height="2" fill="#444"/><rect x="835" y="297" width="1" height="2" fill="#444"/><rect x="848" y="297" width="1" height="2" fill="#444"/><rect x="862" y="297" width="1" height="2" fill="#444"/><rect x="875" y="297" width="1" height="2" fill="#444"/><rect x="888" y="297" width="1" height="2" fill="#444"/><rect x="191" y="297" width="1" height="4" fill="#000"/><rect x="258" y="297" width="1" height="4" fill="#000"/><rect x="325" y="297" width="1" height="4" fill="#000"/><rect x="392" y="297" width="1" height="4" fill="#000"/><rect x="459" y="297" width="1" height="4" fill="#000"/><rect x="526" y="297" width="1" height="4" fill="#000"/><rect x="593" y="297" width="1" height="4" fill="#000"/><rect x="660" y="297" width="1" height="4" fill="#000"/><rect x="727" y="297" width="1" height="4" fill="#000"/><rect x="795" y="297" width="1" height="4" fill="#000"/><rect x="862" y="297" width="1" height="4" fill="#000"/><rect x="896" y="120" width="7" height="177" fill="#0a7a12"/></svg>
<div style="position:absolute;left:-15px;top:286px;width:200px;text-align:right;font-size:12px;line-height:15px;color:#000;white-space:pre;transform:scaleX(0.88);transform-origin:100% 50%">0.0</div>
<div style="position:absolute;left:-15px;top:266px;width:200px;text-align:right;font-size:12px;line-height:15px;color:#000;white-space:pre;transform:scaleX(0.88);transform-origin:100% 50%">0.1</div>
<div style="position:absolute;left:-15px;top:245px;width:200px;text-align:right;font-size:12px;line-height:15px;color:#000;white-space:pre;transform:scaleX(0.88);transform-origin:100% 50%">0.2</div>
<div style="position:absolute;left:-15px;top:225px;width:200px;text-align:right;font-size:12px;line-height:15px;color:#000;white-space:pre;transform:scaleX(0.88);transform-origin:100% 50%">0.3</div>
<div style="position:absolute;left:-15px;top:204px;width:200px;text-align:right;font-size:12px;line-height:15px;color:#000;white-space:pre;transform:scaleX(0.88);transform-origin:100% 50%">0.4</div>
<div style="position:absolute;left:-15px;top:184px;width:200px;text-align:right;font-size:12px;line-height:15px;color:#000;white-space:pre;transform:scaleX(0.88);transform-origin:100% 50%">0.5</div>
<div style="position:absolute;left:-15px;top:164px;width:200px;text-align:right;font-size:12px;line-height:15px;color:#000;white-space:pre;transform:scaleX(0.88);transform-origin:100% 50%">0.6</div>
<div style="position:absolute;left:-15px;top:143px;width:200px;text-align:right;font-size:12px;line-height:15px;color:#000;white-space:pre;transform:scaleX(0.88);transform-origin:100% 50%">0.7</div>
<div style="position:absolute;left:-15px;top:123px;width:200px;text-align:right;font-size:12px;line-height:15px;color:#000;white-space:pre;transform:scaleX(0.88);transform-origin:100% 50%">0.8</div>
<div style="position:absolute;left:-15px;top:102px;width:200px;text-align:right;font-size:12px;line-height:15px;color:#000;white-space:pre;transform:scaleX(0.88);transform-origin:100% 50%">0.9</div>
<div style="position:absolute;left:-15px;top:82px;width:200px;text-align:right;font-size:12px;line-height:15px;color:#000;white-space:pre;transform:scaleX(0.88);transform-origin:100% 50%">1.0</div>
<div style="position:absolute;left:91.0px;top:303px;width:200px;text-align:center;font-size:12px;line-height:15px;color:#000;white-space:pre;transform:scaleX(0.88);transform-origin:50% 50%">400</div>
<div style="position:absolute;left:158.06px;top:303px;width:200px;text-align:center;font-size:12px;line-height:15px;color:#000;white-space:pre;transform:scaleX(0.88);transform-origin:50% 50%">420</div>
<div style="position:absolute;left:225.12px;top:303px;width:200px;text-align:center;font-size:12px;line-height:15px;color:#000;white-space:pre;transform:scaleX(0.88);transform-origin:50% 50%">440</div>
<div style="position:absolute;left:292.18px;top:303px;width:200px;text-align:center;font-size:12px;line-height:15px;color:#000;white-space:pre;transform:scaleX(0.88);transform-origin:50% 50%">460</div>
<div style="position:absolute;left:359.24px;top:303px;width:200px;text-align:center;font-size:12px;line-height:15px;color:#000;white-space:pre;transform:scaleX(0.88);transform-origin:50% 50%">480</div>
<div style="position:absolute;left:426.29999999999995px;top:303px;width:200px;text-align:center;font-size:12px;line-height:15px;color:#000;white-space:pre;transform:scaleX(0.88);transform-origin:50% 50%">500</div>
<div style="position:absolute;left:493.36px;top:303px;width:200px;text-align:center;font-size:12px;line-height:15px;color:#000;white-space:pre;transform:scaleX(0.88);transform-origin:50% 50%">520</div>
<div style="position:absolute;left:560.4200000000001px;top:303px;width:200px;text-align:center;font-size:12px;line-height:15px;color:#000;white-space:pre;transform:scaleX(0.88);transform-origin:50% 50%">540</div>
<div style="position:absolute;left:627.48px;top:303px;width:200px;text-align:center;font-size:12px;line-height:15px;color:#000;white-space:pre;transform:scaleX(0.88);transform-origin:50% 50%">560</div>
<div style="position:absolute;left:694.5400000000001px;top:303px;width:200px;text-align:center;font-size:12px;line-height:15px;color:#000;white-space:pre;transform:scaleX(0.88);transform-origin:50% 50%">580</div>
<div style="position:absolute;left:761.6px;top:303px;width:200px;text-align:center;font-size:12px;line-height:15px;color:#000;white-space:pre;transform:scaleX(0.88);transform-origin:50% 50%">600</div>
<div style="position:absolute;left:430.5px;top:64px;width:200px;text-align:center;font-size:11px;line-height:14px;color:#000;white-space:pre;">Analysis [nm]</div>
<svg style="position:absolute;left:0;top:0" width="1024" height="742"><rect x="190" y="349" width="705" height="208" fill="#FDE2B9"/><rect x="192" y="555" width="702" height="2" fill="#fffaf0"/><line x1="192" y1="534.5" x2="894" y2="534.5" stroke="#6a5436" stroke-width="1" stroke-dasharray="3 3"/><line x1="192" y1="514.5" x2="894" y2="514.5" stroke="#6a5436" stroke-width="1" stroke-dasharray="3 3"/><line x1="192" y1="494.5" x2="894" y2="494.5" stroke="#6a5436" stroke-width="1" stroke-dasharray="3 3"/><line x1="192" y1="474.5" x2="894" y2="474.5" stroke="#6a5436" stroke-width="1" stroke-dasharray="3 3"/><line x1="192" y1="453.5" x2="894" y2="453.5" stroke="#6a5436" stroke-width="1" stroke-dasharray="3 3"/><line x1="192" y1="433.5" x2="894" y2="433.5" stroke="#6a5436" stroke-width="1" stroke-dasharray="3 3"/><line x1="192" y1="413.5" x2="894" y2="413.5" stroke="#6a5436" stroke-width="1" stroke-dasharray="3 3"/><line x1="192" y1="393.5" x2="894" y2="393.5" stroke="#6a5436" stroke-width="1" stroke-dasharray="3 3"/><line x1="192" y1="373.5" x2="894" y2="373.5" stroke="#6a5436" stroke-width="1" stroke-dasharray="3 3"/><line x1="258.5" y1="350" x2="258.5" y2="554" stroke="#6a5436" stroke-width="1" stroke-dasharray="3 3"/><line x1="363.5" y1="350" x2="363.5" y2="554" stroke="#6a5436" stroke-width="1" stroke-dasharray="3 3"/><line x1="469.5" y1="350" x2="469.5" y2="554" stroke="#6a5436" stroke-width="1" stroke-dasharray="3 3"/><line x1="574.5" y1="350" x2="574.5" y2="554" stroke="#6a5436" stroke-width="1" stroke-dasharray="3 3"/><line x1="680.5" y1="350" x2="680.5" y2="554" stroke="#6a5436" stroke-width="1" stroke-dasharray="3 3"/><line x1="785.5" y1="350" x2="785.5" y2="554" stroke="#6a5436" stroke-width="1" stroke-dasharray="3 3"/><line x1="890.5" y1="350" x2="890.5" y2="554" stroke="#6a5436" stroke-width="1" stroke-dasharray="3 3"/><path d="M192.0 554.5 L193.0 554.5 L194.0 554.5 L195.0 554.5 L196.0 554.5 L197.0 554.5 L198.0 554.5 L199.0 554.5 L200.0 554.5 L201.0 554.5 L202.0 554.5 L203.0 554.5 L204.0 554.5 L205.0 554.5 L206.0 554.5 L207.0 554.5 L208.0 554.5 L209.0 554.5 L210.0 554.5 L211.0 554.5 L212.0 554.5 L213.0 554.5 L214.0 554.5 L215.0 554.5 L216.0 554.5 L217.0 554.5 L218.0 554.5 L219.0 554.5 L220.0 554.5 L221.0 554.5 L222.0 554.5 L223.0 554.5 L224.0 554.5 L225.0 554.5 L226.0 554.5 L227.0 554.5 L228.0 554.5 L229.0 554.5 L230.0 554.5 L231.0 554.5 L232.0 554.5 L233.0 554.5 L234.0 554.5 L235.0 554.5 L236.0 554.5 L237.0 554.5 L238.0 554.5 L239.0 554.5 L240.0 554.5 L241.0 554.5 L242.0 554.5 L243.0 554.5 L244.0 554.5 L245.0 554.5 L246.0 554.5 L247.0 554.5 L248.0 554.5 L249.0 554.5 L250.0 554.5 L251.0 554.5 L252.0 554.5 L253.0 554.5 L254.0 554.5 L255.0 554.5 L256.0 554.5 L257.0 554.5 L258.0 554.5 L259.0 554.5 L260.0 554.5 L261.0 554.5 L262.0 554.5 L263.0 554.5 L264.0 554.5 L265.0 554.5 L266.0 554.5 L267.0 554.5 L268.0 554.5 L269.0 554.5 L270.0 554.5 L271.0 554.5 L272.0 554.5 L273.0 554.5 L274.0 554.5 L275.0 554.5 L276.0 554.5 L277.0 554.5 L278.0 554.5 L279.0 554.5 L280.0 554.5 L281.0 554.5 L282.0 554.5 L283.0 554.5 L284.0 554.5 L285.0 554.5 L286.0 554.5 L287.0 554.5 L288.0 554.5 L289.0 554.5 L290.0 554.5 L291.0 554.5 L292.0 554.5 L293.0 554.5 L294.0 554.5 L295.0 554.5 L296.0 554.5 L297.0 554.5 L298.0 554.5 L299.0 554.5 L300.0 554.5 L301.0 554.5 L302.0 554.5 L303.0 554.5 L304.0 554.5 L305.0 554.5 L306.0 554.5 L307.0 554.5 L308.0 554.5 L309.0 554.5 L310.0 554.5 L311.0 554.5 L312.0 554.5 L313.0 554.5 L314.0 554.5 L315.0 554.5 L316.0 554.5 L317.0 554.5 L318.0 554.5 L319.0 554.5 L320.0 554.5 L321.0 554.5 L322.0 554.5 L323.0 554.5 L324.0 554.5 L325.0 554.5 L326.0 554.5 L327.0 554.5 L328.0 554.5 L329.0 554.5 L330.0 554.5 L331.0 554.5 L332.0 554.5 L333.0 554.5 L334.0 554.5 L335.0 554.5 L336.0 554.5 L337.0 554.5 L338.0 554.5 L339.0 554.5 L340.0 554.5 L341.0 554.5 L342.0 554.5 L343.0 554.5 L344.0 554.5 L345.0 554.5 L346.0 554.5 L347.0 554.5 L348.0 554.5 L349.0 554.5 L350.0 554.5 L351.0 554.5 L352.0 554.5 L353.0 554.5 L354.0 554.5 L355.0 554.5 L356.0 554.5 L357.0 554.5 L358.0 554.5 L359.0 554.5 L360.0 554.5 L361.0 554.5 L362.0 554.5 L363.0 554.5 L364.0 554.5 L365.0 554.5 L366.0 554.5 L367.0 554.5 L368.0 554.5 L369.0 554.5 L370.0 554.5 L371.0 554.5 L372.0 554.5 L373.0 554.5 L374.0 554.5 L375.0 554.5 L376.0 554.5 L377.0 554.5 L378.0 554.5 L379.0 554.5 L380.0 554.5 L381.0 554.5 L382.0 554.5 L383.0 554.5 L384.0 554.5 L385.0 554.5 L386.0 554.5 L387.0 554.5 L388.0 554.5 L389.0 554.5 L390.0 554.5 L391.0 554.5 L392.0 554.5 L393.0 554.5 L394.0 554.5 L395.0 554.5 L396.0 554.5 L397.0 554.5 L398.0 554.5 L399.0 554.5 L400.0 554.5 L401.0 554.5 L402.0 554.5 L403.0 554.5 L404.0 554.5 L405.0 554.5 L406.0 554.5 L407.0 554.5 L408.0 554.5 L409.0 554.5 L410.0 554.5 L411.0 554.5 L412.0 554.5 L413.0 554.5 L414.0 554.5 L415.0 554.5 L416.0 554.5 L417.0 554.5 L418.0 554.5 L419.0 554.5 L420.0 554.5 L421.0 554.5 L422.0 554.5 L423.0 554.5 L424.0 554.5 L425.0 554.5 L426.0 554.5 L427.0 554.5 L428.0 554.5 L429.0 554.5 L430.0 554.5 L431.0 554.5 L432.0 554.5 L433.0 554.5 L434.0 554.5 L435.0 554.5 L436.0 554.5 L437.0 554.5 L438.0 554.5 L439.0 554.5 L440.0 554.5 L441.0 554.5 L442.0 554.5 L443.0 554.5 L444.0 554.5 L445.0 554.5 L446.0 554.5 L447.0 554.5 L448.0 554.5 L449.0 554.5 L450.0 554.5 L451.0 554.5 L452.0 554.5 L453.0 554.5 L454.0 554.5 L455.0 554.5 L456.0 554.5 L457.0 554.5 L458.0 554.5 L459.0 554.5 L460.0 554.5 L461.0 554.5 L462.0 554.5 L463.0 554.5 L464.0 554.5 L465.0 554.5 L466.0 554.5 L467.0 554.5 L468.0 554.5 L469.0 554.5 L470.0 554.5 L471.0 554.5 L472.0 554.5 L473.0 554.5 L474.0 554.5 L475.0 554.5 L476.0 554.5 L477.0 554.5 L478.0 554.5 L479.0 554.5 L480.0 554.5 L481.0 554.5 L482.0 554.5 L483.0 554.5 L484.0 554.5 L485.0 554.5 L486.0 554.5 L487.0 554.5 L488.0 554.5 L489.0 554.5 L490.0 553.3 L491.0 553.3 L492.0 553.3 L493.0 553.3 L494.0 552.3 L495.0 553.3 L496.0 553.3 L497.0 553.3 L498.0 553.3 L499.0 553.3 L500.0 553.3 L501.0 553.3 L502.0 552.3 L503.0 553.3 L504.0 553.3 L505.0 553.3 L506.0 553.3 L507.0 553.3 L508.0 553.3 L509.0 553.3 L510.0 553.3 L511.0 553.3 L512.0 553.3 L513.0 553.3 L514.0 553.3 L515.0 553.3 L516.0 553.3 L517.0 553.3 L518.0 553.3 L519.0 553.3 L520.0 553.3 L521.0 553.3 L522.0 553.3 L523.0 553.3 L524.0 553.3 L525.0 553.3 L526.0 553.3 L527.0 553.3 L528.0 553.3 L529.0 553.3 L530.0 552.3 L531.0 552.3 L532.0 553.3 L533.0 553.3 L534.0 553.3 L535.0 553.3 L536.0 553.3 L537.0 553.3 L538.0 553.3 L539.0 553.3 L540.0 553.3 L541.0 553.3 L542.0 552.3 L543.0 553.3 L544.0 553.3 L545.0 553.3 L546.0 553.3 L547.0 553.3 L548.0 552.3 L549.0 553.3 L550.0 553.3 L551.0 553.3 L552.0 553.3 L553.0 553.3 L554.0 553.3 L555.0 553.3 L556.0 553.3 L557.0 553.3 L558.0 553.3 L559.0 552.3 L560.0 553.3 L561.0 553.3 L562.0 553.3 L563.0 553.3 L564.0 553.3 L565.0 553.3 L566.0 552.3 L567.0 553.3 L568.0 553.3 L569.0 553.3 L570.0 552.3 L571.0 552.3 L572.0 552.3 L573.0 553.3 L574.0 553.3 L575.0 553.3 L576.0 553.3 L577.0 553.3 L578.0 553.3 L579.0 553.3 L580.0 553.3 L581.0 552.3 L582.0 551.5 L583.0 552.3 L584.0 551.5 L585.0 552.3 L586.0 552.5 L587.0 551.5 L588.3 549.5 L589.0 543.0 L590.3 527.0 L591.3 505.0 L592.0 480.0 L592.6 470.0 L593.6 470.0 L594.2 485.0 L595.0 505.0 L595.6 527.0 L596.3 545.0 L597.5 549.0 L599.0 551.5 L601.0 552.5 L602.0 553.3 L603.0 553.3 L604.0 553.3 L605.0 553.3 L606.0 552.3 L607.0 553.3 L608.0 553.3 L609.0 553.3 L610.0 553.3 L611.0 553.3 L612.0 553.3 L613.0 553.3 L614.0 553.3 L615.0 553.3 L616.0 553.3 L617.0 553.3 L618.0 553.3 L619.0 553.3 L620.0 553.3 L621.0 553.3 L622.0 553.3 L623.0 553.3 L624.0 553.3 L625.0 553.3 L626.0 553.3 L627.0 553.3 L628.0 553.3 L629.0 553.3 L630.0 552.3 L631.0 552.3 L632.0 553.3 L633.0 553.3 L634.0 553.3 L635.0 553.3 L636.0 553.3 L637.0 553.3 L638.0 553.3 L639.0 553.3 L640.0 553.3 L641.0 553.3 L642.0 553.3 L643.0 553.3 L644.0 553.3 L645.0 553.3 L646.0 553.3 L647.0 553.3 L648.0 553.3 L649.0 553.3 L650.0 553.3 L651.0 553.3 L652.0 553.3 L653.0 553.3 L654.0 553.3 L655.0 553.3 L656.0 553.3 L657.0 553.3 L658.0 553.3 L659.0 553.3 L660.0 553.3 L661.0 553.3 L662.0 553.3 L663.0 553.3 L664.0 553.3 L665.0 553.3 L666.0 553.3 L667.0 553.3 L668.0 553.3 L669.0 553.3 L670.0 553.3 L671.0 553.3 L672.0 553.3 L673.0 553.3 L674.0 553.3 L675.0 552.3 L676.0 553.3 L677.0 553.3 L678.0 553.3 L679.0 553.3 L680.0 553.3 L681.0 553.3 L682.0 553.3 L683.0 553.3 L684.0 553.3 L685.0 553.3 L686.0 553.3 L687.0 553.3 L688.0 553.3 L689.0 553.3 L690.0 553.3 L691.0 553.3 L692.0 553.3 L693.0 553.3 L694.0 553.3 L695.0 553.3 L696.0 553.3 L697.0 553.3 L698.0 553.3 L699.0 552.3 L700.0 553.3 L701.0 553.3 L702.0 553.3 L703.0 553.3 L704.0 553.3 L705.0 553.3 L706.0 553.3 L707.0 552.3 L708.0 553.3 L709.0 553.3 L710.0 553.3 L711.0 553.3 L712.0 553.3 L713.0 553.3 L714.0 553.3 L715.0 553.3 L716.0 553.3 L717.0 553.3 L718.0 553.3 L719.0 553.3 L720.0 553.3 L721.0 553.3 L722.0 553.3 L723.0 553.3 L724.0 553.3 L725.0 553.3 L726.0 553.3 L727.0 553.3 L728.0 553.3 L729.0 552.3 L730.0 553.3 L731.0 553.3 L732.0 553.3 L733.0 553.3 L734.0 553.3 L735.0 553.3 L736.0 553.3 L737.0 552.3 L738.0 553.3 L739.0 553.3 L740.0 553.3 L741.0 553.3 L742.0 553.3 L743.0 553.3 L744.0 553.3 L745.0 553.3 L746.0 553.3 L747.0 553.3 L748.0 553.3 L749.0 553.3 L750.0 553.3 L751.0 553.3 L752.0 553.3 L753.0 553.3 L754.0 553.3 L755.0 553.3 L756.0 553.3 L757.0 553.3 L758.0 552.3 L759.0 553.3 L760.0 553.3 L761.0 553.3 L762.0 553.3 L763.0 553.3 L764.0 553.3 L765.0 553.3 L766.0 553.3 L767.0 553.3 L768.0 553.3 L769.0 553.3 L770.0 553.3 L771.0 553.3 L772.0 553.3 L773.0 553.3 L774.0 553.3 L775.0 553.3 L776.0 553.3 L777.0 553.3 L778.0 553.3 L779.0 552.3 L780.0 553.3 L781.0 553.3 L782.0 552.3 L783.0 553.3 L784.0 553.3 L785.0 553.3 L786.0 553.3 L787.0 553.3 L788.0 553.3 L789.0 553.3 L790.0 553.3 L791.0 553.3 L792.0 553.3 L793.0 553.3 L794.0 553.3 L795.0 552.3 L796.0 553.3 L797.0 553.3 L798.0 553.3 L799.0 553.3 L800.0 553.3 L801.0 553.3 L802.0 553.3 L803.0 553.3 L804.0 553.3 L805.0 553.3 L806.0 553.3 L807.0 553.3 L808.0 553.3 L809.0 553.3 L810.0 552.3 L811.0 553.3 L812.0 553.3 L813.0 553.3 L814.0 553.3 L815.0 553.3 L816.0 552.3 L817.0 553.3 L818.0 553.3 L819.0 553.3 L820.0 553.3 L821.0 553.3 L822.0 553.3 L823.0 553.3 L824.0 553.3 L825.0 553.3 L826.0 553.3 L827.0 553.3 L828.0 553.3 L829.0 553.3 L830.0 553.3 L831.0 553.3 L832.0 553.3 L833.0 552.3 L834.0 553.3 L835.0 553.3 L836.0 553.3 L837.0 553.3 L838.0 553.3 L839.0 553.3 L840.0 553.3 L841.0 553.3 L842.0 553.3 L843.0 553.3 L844.0 553.3 L845.0 553.3 L846.0 553.3 L847.0 552.3 L848.0 553.3 L849.0 553.3 L850.0 553.3 L851.0 553.3 L852.0 553.3 L853.0 553.3 L854.0 553.3 L855.0 553.3 L856.0 553.3 L857.0 553.3 L858.0 553.3 L859.0 553.3 L860.0 553.3 L861.0 553.3 L862.0 553.3 L863.0 553.3 L864.0 553.3 L865.0 553.3 L866.0 553.3 L867.0 553.3 L868.0 553.3 L869.0 553.3 L870.0 553.3 L871.0 553.3 L872.0 553.3 L873.0 553.3 L874.0 553.3 L875.0 553.3 L876.0 552.3 L877.0 553.3 L878.0 553.3 L879.0 553.3 L880.0 553.3 L881.0 553.3 L882.0 553.3 L883.0 553.3 L884.0 552.3 L885.0 552.3 L886.0 553.3 L887.0 553.3 L888.0 553.3 L889.0 553.3 L890.0 553.3 L891.0 553.3 L892.0 553.3 L893.0 553.3" fill="none" stroke="#000" stroke-width="1.3" stroke-linejoin="round"/><rect x="190" y="349" width="705" height="1" fill="#000"/><rect x="894" y="349" width="1" height="208" fill="#000"/><rect x="190" y="349" width="2" height="210" fill="#000"/><rect x="190" y="557" width="705" height="2" fill="#000"/><rect x="187" y="554" width="3" height="1" fill="#444"/><rect x="187" y="534" width="3" height="1" fill="#444"/><rect x="187" y="514" width="3" height="1" fill="#444"/><rect x="187" y="494" width="3" height="1" fill="#444"/><rect x="187" y="474" width="3" height="1" fill="#444"/><rect x="187" y="453" width="3" height="1" fill="#444"/><rect x="187" y="433" width="3" height="1" fill="#444"/><rect x="187" y="413" width="3" height="1" fill="#444"/><rect x="187" y="393" width="3" height="1" fill="#444"/><rect x="187" y="373" width="3" height="1" fill="#444"/><rect x="187" y="353" width="3" height="1" fill="#444"/><rect x="189" y="554" width="1" height="1" fill="#666"/><rect x="189" y="549" width="1" height="1" fill="#666"/><rect x="189" y="544" width="1" height="1" fill="#666"/><rect x="189" y="539" width="1" height="1" fill="#666"/><rect x="189" y="534" width="1" height="1" fill="#666"/><rect x="189" y="529" width="1" height="1" fill="#666"/><rect x="189" y="524" width="1" height="1" fill="#666"/><rect x="189" y="519" width="1" height="1" fill="#666"/><rect x="189" y="514" width="1" height="1" fill="#666"/><rect x="189" y="509" width="1" height="1" fill="#666"/><rect x="189" y="504" width="1" height="1" fill="#666"/><rect x="189" y="499" width="1" height="1" fill="#666"/><rect x="189" y="494" width="1" height="1" fill="#666"/><rect x="189" y="489" width="1" height="1" fill="#666"/><rect x="189" y="484" width="1" height="1" fill="#666"/><rect x="189" y="479" width="1" height="1" fill="#666"/><rect x="189" y="474" width="1" height="1" fill="#666"/><rect x="189" y="468" width="1" height="1" fill="#666"/><rect x="189" y="463" width="1" height="1" fill="#666"/><rect x="189" y="458" width="1" height="1" fill="#666"/><rect x="189" y="453" width="1" height="1" fill="#666"/><rect x="189" y="448" width="1" height="1" fill="#666"/><rect x="189" y="443" width="1" height="1" fill="#666"/><rect x="189" y="438" width="1" height="1" fill="#666"/><rect x="189" y="433" width="1" height="1" fill="#666"/><rect x="189" y="428" width="1" height="1" fill="#666"/><rect x="189" y="423" width="1" height="1" fill="#666"/><rect x="189" y="418" width="1" height="1" fill="#666"/><rect x="189" y="413" width="1" height="1" fill="#666"/><rect x="189" y="408" width="1" height="1" fill="#666"/><rect x="189" y="403" width="1" height="1" fill="#666"/><rect x="189" y="398" width="1" height="1" fill="#666"/><rect x="189" y="393" width="1" height="1" fill="#666"/><rect x="189" y="388" width="1" height="1" fill="#666"/><rect x="189" y="383" width="1" height="1" fill="#666"/><rect x="189" y="378" width="1" height="1" fill="#666"/><rect x="189" y="373" width="1" height="1" fill="#666"/><rect x="189" y="368" width="1" height="1" fill="#666"/><rect x="189" y="363" width="1" height="1" fill="#666"/><rect x="189" y="358" width="1" height="1" fill="#666"/><rect x="189" y="353" width="1" height="1" fill="#666"/><rect x="195" y="559" width="1" height="2" fill="#444"/><rect x="216" y="559" width="1" height="2" fill="#444"/><rect x="237" y="559" width="1" height="2" fill="#444"/><rect x="258" y="559" width="1" height="2" fill="#444"/><rect x="279" y="559" width="1" height="2" fill="#444"/><rect x="300" y="559" width="1" height="2" fill="#444"/><rect x="321" y="559" width="1" height="2" fill="#444"/><rect x="342" y="559" width="1" height="2" fill="#444"/><rect x="363" y="559" width="1" height="2" fill="#444"/><rect x="384" y="559" width="1" height="2" fill="#444"/><rect x="405" y="559" width="1" height="2" fill="#444"/><rect x="427" y="559" width="1" height="2" fill="#444"/><rect x="448" y="559" width="1" height="2" fill="#444"/><rect x="469" y="559" width="1" height="2" fill="#444"/><rect x="490" y="559" width="1" height="2" fill="#444"/><rect x="511" y="559" width="1" height="2" fill="#444"/><rect x="532" y="559" width="1" height="2" fill="#444"/><rect x="553" y="559" width="1" height="2" fill="#444"/><rect x="574" y="559" width="1" height="2" fill="#444"/><rect x="595" y="559" width="1" height="2" fill="#444"/><rect x="616" y="559" width="1" height="2" fill="#444"/><rect x="637" y="559" width="1" height="2" fill="#444"/><rect x="658" y="559" width="1" height="2" fill="#444"/><rect x="680" y="559" width="1" height="2" fill="#444"/><rect x="701" y="559" width="1" height="2" fill="#444"/><rect x="722" y="559" width="1" height="2" fill="#444"/><rect x="743" y="559" width="1" height="2" fill="#444"/><rect x="764" y="559" width="1" height="2" fill="#444"/><rect x="785" y="559" width="1" height="2" fill="#444"/><rect x="806" y="559" width="1" height="2" fill="#444"/><rect x="827" y="559" width="1" height="2" fill="#444"/><rect x="848" y="559" width="1" height="2" fill="#444"/><rect x="869" y="559" width="1" height="2" fill="#444"/><rect x="890" y="559" width="1" height="2" fill="#444"/><rect x="258" y="559" width="1" height="4" fill="#000"/><rect x="363" y="559" width="1" height="4" fill="#000"/><rect x="469" y="559" width="1" height="4" fill="#000"/><rect x="574" y="559" width="1" height="4" fill="#000"/><rect x="680" y="559" width="1" height="4" fill="#000"/><rect x="785" y="559" width="1" height="4" fill="#000"/><rect x="890" y="559" width="1" height="4" fill="#000"/><rect x="896" y="473" width="7" height="86" fill="#0a7a12"/></svg>
<div style="position:absolute;left:-15px;top:548px;width:200px;text-align:right;font-size:12px;line-height:15px;color:#000;white-space:pre;transform:scaleX(0.88);transform-origin:100% 50%">0.0</div>
<div style="position:absolute;left:-15px;top:528px;width:200px;text-align:right;font-size:12px;line-height:15px;color:#000;white-space:pre;transform:scaleX(0.88);transform-origin:100% 50%">0.1</div>
<div style="position:absolute;left:-15px;top:508px;width:200px;text-align:right;font-size:12px;line-height:15px;color:#000;white-space:pre;transform:scaleX(0.88);transform-origin:100% 50%">0.2</div>
<div style="position:absolute;left:-15px;top:488px;width:200px;text-align:right;font-size:12px;line-height:15px;color:#000;white-space:pre;transform:scaleX(0.88);transform-origin:100% 50%">0.3</div>
<div style="position:absolute;left:-15px;top:468px;width:200px;text-align:right;font-size:12px;line-height:15px;color:#000;white-space:pre;transform:scaleX(0.88);transform-origin:100% 50%">0.4</div>
<div style="position:absolute;left:-15px;top:447px;width:200px;text-align:right;font-size:12px;line-height:15px;color:#000;white-space:pre;transform:scaleX(0.88);transform-origin:100% 50%">0.5</div>
<div style="position:absolute;left:-15px;top:427px;width:200px;text-align:right;font-size:12px;line-height:15px;color:#000;white-space:pre;transform:scaleX(0.88);transform-origin:100% 50%">0.6</div>
<div style="position:absolute;left:-15px;top:407px;width:200px;text-align:right;font-size:12px;line-height:15px;color:#000;white-space:pre;transform:scaleX(0.88);transform-origin:100% 50%">0.7</div>
<div style="position:absolute;left:-15px;top:387px;width:200px;text-align:right;font-size:12px;line-height:15px;color:#000;white-space:pre;transform:scaleX(0.88);transform-origin:100% 50%">0.8</div>
<div style="position:absolute;left:-15px;top:367px;width:200px;text-align:right;font-size:12px;line-height:15px;color:#000;white-space:pre;transform:scaleX(0.88);transform-origin:100% 50%">0.9</div>
<div style="position:absolute;left:-15px;top:347px;width:200px;text-align:right;font-size:12px;line-height:15px;color:#000;white-space:pre;transform:scaleX(0.88);transform-origin:100% 50%">1.0</div>
<div style="position:absolute;left:157.89999999999998px;top:565px;width:200px;text-align:center;font-size:12px;line-height:15px;color:#000;white-space:pre;transform:scaleX(0.88);transform-origin:50% 50%">530.5</div>
<div style="position:absolute;left:263.29999999999995px;top:565px;width:200px;text-align:center;font-size:12px;line-height:15px;color:#000;white-space:pre;transform:scaleX(0.88);transform-origin:50% 50%">531</div>
<div style="position:absolute;left:368.7px;top:565px;width:200px;text-align:center;font-size:12px;line-height:15px;color:#000;white-space:pre;transform:scaleX(0.88);transform-origin:50% 50%">531.5</div>
<div style="position:absolute;left:474.1px;top:565px;width:200px;text-align:center;font-size:12px;line-height:15px;color:#000;white-space:pre;transform:scaleX(0.88);transform-origin:50% 50%">532</div>
<div style="position:absolute;left:579.5px;top:565px;width:200px;text-align:center;font-size:12px;line-height:15px;color:#000;white-space:pre;transform:scaleX(0.88);transform-origin:50% 50%">532.5</div>
<div style="position:absolute;left:684.9px;top:565px;width:200px;text-align:center;font-size:12px;line-height:15px;color:#000;white-space:pre;transform:scaleX(0.88);transform-origin:50% 50%">533</div>
<div style="position:absolute;left:788.3000000000001px;top:565px;width:200px;text-align:center;font-size:12px;line-height:15px;color:#000;white-space:pre;transform:scaleX(0.88);transform-origin:50% 50%">533.</div>
<div style="position:absolute;left:430.5px;top:329px;width:200px;text-align:center;font-size:11px;line-height:14px;color:#000;white-space:pre;">Analysis [nm]</div>
<div style="position:absolute;left:158px;top:596px;width:376px;height:124px;border:1px solid #fff;box-sizing:border-box"></div>
<div style="position:absolute;left:157px;top:595px;width:376px;height:124px;border:1px solid #A09D8E;box-sizing:border-box"></div>
<div style="position:absolute;left:166px;top:591px;width:82px;height:8px;background:#ECE9D8"></div>
<div style="position:absolute;left:168px;top:590px;font-size:11px;line-height:14px;font-family:'Liberation Sans', sans-serif;color:#000;white-space:pre;">Wavelength,  air</div>
<div style="position:absolute;left:156.0px;top:626px;width:380px;text-align:center;font-size:57.6px;line-height:67px;color:#000;white-space:pre;-webkit-text-stroke:0.6px #000">532.089 nm</div>
<div style="position:absolute;left:541px;top:596px;width:377px;height:124px;border:1px solid #fff;box-sizing:border-box"></div>
<div style="position:absolute;left:540px;top:595px;width:377px;height:124px;border:1px solid #A09D8E;box-sizing:border-box"></div>
<div style="position:absolute;left:548px;top:591px;width:52px;height:8px;background:#ECE9D8"></div>
<div style="position:absolute;left:551px;top:590px;font-size:11px;line-height:14px;font-family:'Liberation Sans', sans-serif;color:#000;white-space:pre;">Linewidth</div>
<div style="position:absolute;left:538.5px;top:626px;width:380px;text-align:center;font-size:57.6px;line-height:67px;color:#000;white-space:pre;-webkit-text-stroke:0.6px #000">&lt; 3 pm</div>
<div style="position:absolute;left:926px;top:59px;width:96px;height:80px;border:1px solid #fff;box-sizing:border-box"></div>
<div style="position:absolute;left:925px;top:58px;width:96px;height:80px;border:1px solid #A09D8E;box-sizing:border-box"></div>
<div style="position:absolute;left:934px;top:57px;width:66px;height:4px;background:#ECE9D8"></div>
<div style="position:absolute;left:936px;top:53px;font-size:11px;line-height:14px;font-family:'Liberation Sans', sans-serif;color:#000;white-space:pre;">Expo. 1  [ms]</div>
<div style="position:absolute;left:935px;top:75px;font-size:11px;line-height:14px;font-family:'Liberation Sans', sans-serif;color:#000;white-space:pre;">1</div>
<div style="position:absolute;left:933px;top:100px;font-size:11px;line-height:14px;font-family:'Liberation Sans', sans-serif;color:#000;white-space:pre;">2+</div>
<div style="position:absolute;left:952px;top:72px;width:44px;height:20px;box-sizing:border-box;border-top:1px solid #aca899;border-left:1px solid #aca899;border-right:1px solid #fff;border-bottom:1px solid #fff"><div style="width:42px;height:18px;box-sizing:border-box;border-top:1px solid #716f64;border-left:1px solid #716f64;border-right:1px solid #ECE9D8;border-bottom:1px solid #ECE9D8;background:#fff"></div></div>
<div style="position:absolute;left:955px;top:74px;font-size:11px;line-height:14px;font-family:'Liberation Sans', sans-serif;color:#000;white-space:pre;">1600</div>
<div style="position:absolute;left:997px;top:72px;width:15px;height:10px;box-sizing:border-box;border-top:1px solid #fff;border-left:1px solid #fff;border-right:1px solid #716f64;border-bottom:1px solid #716f64;background:#ECE9D8"><div style="width:13px;height:8px;box-sizing:border-box;border-right:1px solid #aca899;border-bottom:1px solid #aca899"></div></div>
<div style="position:absolute;left:997px;top:82px;width:15px;height:10px;box-sizing:border-box;border-top:1px solid #fff;border-left:1px solid #fff;border-right:1px solid #716f64;border-bottom:1px solid #716f64;background:#ECE9D8"><div style="width:13px;height:8px;box-sizing:border-box;border-right:1px solid #aca899;border-bottom:1px solid #aca899"></div></div>
<div style="position:absolute;left:1004px;top:75px;width:1px;height:1px;background:#000"></div>
<div style="position:absolute;left:1003px;top:76px;width:3px;height:1px;background:#000"></div>
<div style="position:absolute;left:1003px;top:86px;width:3px;height:1px;background:#000"></div>
<div style="position:absolute;left:1004px;top:87px;width:1px;height:1px;background:#000"></div>
<div style="position:absolute;left:952px;top:97px;width:44px;height:20px;box-sizing:border-box;border-top:1px solid #aca899;border-left:1px solid #aca899;border-right:1px solid #fff;border-bottom:1px solid #fff"><div style="width:42px;height:18px;box-sizing:border-box;border-top:1px solid #716f64;border-left:1px solid #716f64;border-right:1px solid #ECE9D8;border-bottom:1px solid #ECE9D8;background:#fff"></div></div>
<div style="position:absolute;left:955px;top:99px;font-size:11px;line-height:14px;font-family:'Liberation Sans', sans-serif;color:#000;white-space:pre;">2000</div>
<div style="position:absolute;left:997px;top:97px;width:15px;height:10px;box-sizing:border-box;border-top:1px solid #fff;border-left:1px solid #fff;border-right:1px solid #716f64;border-bottom:1px solid #716f64;background:#ECE9D8"><div style="width:13px;height:8px;box-sizing:border-box;border-right:1px solid #aca899;border-bottom:1px solid #aca899"></div></div>
<div style="position:absolute;left:997px;top:107px;width:15px;height:10px;box-sizing:border-box;border-top:1px solid #fff;border-left:1px solid #fff;border-right:1px solid #716f64;border-bottom:1px solid #716f64;background:#ECE9D8"><div style="width:13px;height:8px;box-sizing:border-box;border-right:1px solid #aca899;border-bottom:1px solid #aca899"></div></div>
<div style="position:absolute;left:1004px;top:100px;width:1px;height:1px;background:#000"></div>
<div style="position:absolute;left:1003px;top:101px;width:3px;height:1px;background:#000"></div>
<div style="position:absolute;left:1003px;top:111px;width:3px;height:1px;background:#000"></div>
<div style="position:absolute;left:1004px;top:112px;width:1px;height:1px;background:#000"></div>
<div style="position:absolute;left:932px;top:121px;width:12px;height:12px;box-sizing:border-box;border-top:1px solid #8a877a;border-left:1px solid #8a877a;border-right:1px solid #fff;border-bottom:1px solid #fff"><div style="width:10px;height:10px;box-sizing:border-box;border-top:1px solid #3c3c3c;border-left:1px solid #3c3c3c;background:#fff"></div></div>
<svg style="position:absolute;left:932px;top:121px" width="12" height="12"><path d="M2.5 4.5 L4.5 6.5 L9 2 L9 5 L4.5 9.5 L2.5 7.5 Z" fill="#000"/></svg>
<div style="position:absolute;left:950px;top:121px;font-size:11px;line-height:14px;font-family:'Liberation Sans', sans-serif;color:#000;white-space:pre;">Automatic</div>
<div style="position:absolute;left:926px;top:154px;width:96px;height:40px;border:1px solid #fff;box-sizing:border-box"></div>
<div style="position:absolute;left:925px;top:153px;width:96px;height:40px;border:1px solid #A09D8E;box-sizing:border-box"></div>
<div style="position:absolute;left:934px;top:152px;width:62px;height:4px;background:#ECE9D8"></div>
<div style="position:absolute;left:936px;top:148px;font-size:11px;line-height:14px;font-family:'Liberation Sans', sans-serif;color:#000;white-space:pre;">Interval [ms]</div>
<div style="position:absolute;left:1004px;top:149px;width:12px;height:12px;box-sizing:border-box;border-top:1px solid #8a877a;border-left:1px solid #8a877a;border-right:1px solid #fff;border-bottom:1px solid #fff"><div style="width:10px;height:10px;box-sizing:border-box;border-top:1px solid #3c3c3c;border-left:1px solid #3c3c3c;background:#fff"></div></div>
<div style="position:absolute;left:932px;top:166px;width:64px;height:21px;box-sizing:border-box;border-top:1px solid #aca899;border-left:1px solid #aca899;border-right:1px solid #fff;border-bottom:1px solid #fff"><div style="width:62px;height:19px;box-sizing:border-box;border-top:1px solid #716f64;border-left:1px solid #716f64;border-right:1px solid #ECE9D8;border-bottom:1px solid #ECE9D8;background:#ECE9D8"></div></div>
<div style="position:absolute;left:997px;top:166px;width:15px;height:10px;box-sizing:border-box;border-top:1px solid #fff;border-left:1px solid #fff;border-right:1px solid #716f64;border-bottom:1px solid #716f64;background:#ECE9D8"><div style="width:13px;height:8px;box-sizing:border-box;border-right:1px solid #aca899;border-bottom:1px solid #aca899"></div></div>
<div style="position:absolute;left:997px;top:176px;width:15px;height:11px;box-sizing:border-box;border-top:1px solid #fff;border-left:1px solid #fff;border-right:1px solid #716f64;border-bottom:1px solid #716f64;background:#ECE9D8"><div style="width:13px;height:9px;box-sizing:border-box;border-right:1px solid #aca899;border-bottom:1px solid #aca899"></div></div>
<div style="position:absolute;left:1004px;top:169px;width:1px;height:1px;background:#aca899"></div>
<div style="position:absolute;left:1003px;top:170px;width:3px;height:1px;background:#aca899"></div>
<div style="position:absolute;left:1003px;top:180px;width:3px;height:1px;background:#aca899"></div>
<div style="position:absolute;left:1004px;top:181px;width:1px;height:1px;background:#aca899"></div>
<div style="position:absolute;left:926px;top:209px;width:96px;height:79px;border:1px solid #fff;box-sizing:border-box"></div>
<div style="position:absolute;left:925px;top:208px;width:96px;height:79px;border:1px solid #A09D8E;box-sizing:border-box"></div>
<div style="position:absolute;left:934px;top:207px;width:68px;height:4px;background:#ECE9D8"></div>
<div style="position:absolute;left:936px;top:203px;font-size:11px;line-height:14px;font-family:'Liberation Sans', sans-serif;color:#000;white-space:pre;">AutoCal each</div>
<div style="position:absolute;left:932px;top:220px;width:64px;height:20px;box-sizing:border-box;border-top:1px solid #aca899;border-left:1px solid #aca899;border-right:1px solid #fff;border-bottom:1px solid #fff"><div style="width:62px;height:18px;box-sizing:border-box;border-top:1px solid #716f64;border-left:1px solid #716f64;border-right:1px solid #ECE9D8;border-bottom:1px solid #ECE9D8;background:#fff"></div></div>
<div style="position:absolute;left:935px;top:222px;font-size:11px;line-height:14px;font-family:'Liberation Sans', sans-serif;color:#000;white-space:pre;">301</div>
<div style="position:absolute;left:997px;top:220px;width:15px;height:10px;box-sizing:border-box;border-top:1px solid #fff;border-left:1px solid #fff;border-right:1px solid #716f64;border-bottom:1px solid #716f64;background:#ECE9D8"><div style="width:13px;height:8px;box-sizing:border-box;border-right:1px solid #aca899;border-bottom:1px solid #aca899"></div></div>
<div style="position:absolute;left:997px;top:230px;width:15px;height:10px;box-sizing:border-box;border-top:1px solid #fff;border-left:1px solid #fff;border-right:1px solid #716f64;border-bottom:1px solid #716f64;background:#ECE9D8"><div style="width:13px;height:8px;box-sizing:border-box;border-right:1px solid #aca899;border-bottom:1px solid #aca899"></div></div>
<div style="position:absolute;left:1004px;top:223px;width:1px;height:1px;background:#000"></div>
<div style="position:absolute;left:1003px;top:224px;width:3px;height:1px;background:#000"></div>
<div style="position:absolute;left:1003px;top:234px;width:3px;height:1px;background:#000"></div>
<div style="position:absolute;left:1004px;top:235px;width:1px;height:1px;background:#000"></div>
<div style="position:absolute;left:932px;top:245px;width:80px;height:19px;box-sizing:border-box;border-top:1px solid #aca899;border-left:1px solid #aca899;border-right:1px solid #fff;border-bottom:1px solid #fff"><div style="width:78px;height:17px;box-sizing:border-box;border-top:1px solid #716f64;border-left:1px solid #716f64;border-right:1px solid #ECE9D8;border-bottom:1px solid #ECE9D8;background:#fff"></div></div>
<div style="position:absolute;left:936px;top:248px;font-size:11px;line-height:14px;font-family:'Liberation Sans', sans-serif;color:#000;white-space:pre;">Measuremei</div>
<div style="position:absolute;left:994px;top:247px;width:16px;height:15px;box-sizing:border-box;border-top:1px solid #fff;border-left:1px solid #fff;border-right:1px solid #716f64;border-bottom:1px solid #716f64;background:#ECE9D8"><div style="width:14px;height:13px;box-sizing:border-box;border-right:1px solid #aca899;border-bottom:1px solid #aca899"></div></div>
<svg style="position:absolute;left:994px;top:247px" width="16" height="15"><path d="M4 6 L12 6 L8 10 Z" fill="#000"/></svg>
<div style="position:absolute;left:932px;top:269px;width:12px;height:12px;box-sizing:border-box;border-top:1px solid #8a877a;border-left:1px solid #8a877a;border-right:1px solid #fff;border-bottom:1px solid #fff"><div style="width:10px;height:10px;box-sizing:border-box;border-top:1px solid #3c3c3c;border-left:1px solid #3c3c3c;background:#fff"></div></div>
<div style="position:absolute;left:950px;top:269px;font-size:11px;line-height:14px;font-family:'Liberation Sans', sans-serif;color:#000;white-space:pre;">Retry</div>
<div style="position:absolute;left:926px;top:303px;width:96px;height:96px;border:1px solid #fff;box-sizing:border-box"></div>
<div style="position:absolute;left:925px;top:302px;width:96px;height:96px;border:1px solid #A09D8E;box-sizing:border-box"></div>
<div style="position:absolute;left:934px;top:301px;width:45px;height:4px;background:#ECE9D8"></div>
<div style="position:absolute;left:936px;top:297px;font-size:11px;line-height:14px;font-family:'Liberation Sans', sans-serif;color:#000;white-space:pre;">Average</div>
<div style="position:absolute;left:935px;top:321px;font-size:11px;line-height:14px;font-family:'Liberation Sans', sans-serif;color:#000;white-space:pre;">Cnt.</div>
<div style="position:absolute;left:957px;top:317px;width:39px;height:19px;box-sizing:border-box;border-top:1px solid #aca899;border-left:1px solid #aca899;border-right:1px solid #fff;border-bottom:1px solid #fff"><div style="width:37px;height:17px;box-sizing:border-box;border-top:1px solid #716f64;border-left:1px solid #716f64;border-right:1px solid #ECE9D8;border-bottom:1px solid #ECE9D8;background:#fff"></div></div>
<div style="position:absolute;left:960px;top:319px;font-size:11px;line-height:14px;font-family:'Liberation Sans', sans-serif;color:#000;white-space:pre;">1</div>
<div style="position:absolute;left:997px;top:317px;width:15px;height:9px;box-sizing:border-box;border-top:1px solid #fff;border-left:1px solid #fff;border-right:1px solid #716f64;border-bottom:1px solid #716f64;background:#ECE9D8"><div style="width:13px;height:7px;box-sizing:border-box;border-right:1px solid #aca899;border-bottom:1px solid #aca899"></div></div>
<div style="position:absolute;left:997px;top:326px;width:15px;height:10px;box-sizing:border-box;border-top:1px solid #fff;border-left:1px solid #fff;border-right:1px solid #716f64;border-bottom:1px solid #716f64;background:#ECE9D8"><div style="width:13px;height:8px;box-sizing:border-box;border-right:1px solid #aca899;border-bottom:1px solid #aca899"></div></div>
<div style="position:absolute;left:1004px;top:319px;width:1px;height:1px;background:#000"></div>
<div style="position:absolute;left:1003px;top:320px;width:3px;height:1px;background:#000"></div>
<div style="position:absolute;left:1003px;top:330px;width:3px;height:1px;background:#000"></div>
<div style="position:absolute;left:1004px;top:331px;width:1px;height:1px;background:#000"></div>
<svg style="position:absolute;left:933px;top:342px" width="12" height="13" viewBox="0 0 12 13">
<circle cx="5.5" cy="6.5" r="5" fill="#f4f2ea"/>
<path d="M9.2 3.0 A5 5 0 0 0 1.8 9.9" fill="none" stroke="#a8a699" stroke-width="1.2"/>
<circle cx="5.6" cy="6.6" r="2.1" fill="#aca899"/>
</svg>
<div style="position:absolute;left:950px;top:342px;font-size:11px;line-height:14px;font-family:'Liberation Sans', sans-serif;color:#aca899;white-space:pre;">Floating</div>
<svg style="position:absolute;left:933px;top:357px" width="12" height="13" viewBox="0 0 12 13">
<circle cx="5.5" cy="6.5" r="5" fill="#f4f2ea"/>
<path d="M9.2 3.0 A5 5 0 0 0 1.8 9.9" fill="none" stroke="#a8a699" stroke-width="1.2"/>

</svg>
<div style="position:absolute;left:950px;top:357px;font-size:11px;line-height:14px;font-family:'Liberation Sans', sans-serif;color:#aca899;white-space:pre;">Succeeding</div>
<div style="position:absolute;left:933px;top:377px;width:12px;height:12px;box-sizing:border-box;border-top:1px solid #b8b5a8;border-left:1px solid #b8b5a8;border-right:1px solid #fff;border-bottom:1px solid #fff"><div style="width:10px;height:10px;box-sizing:border-box;border-top:1px solid #9a978a;border-left:1px solid #9a978a;background:#f4f2ea"></div></div>
<div style="position:absolute;left:950px;top:377px;font-size:11px;line-height:14px;font-family:'Liberation Sans', sans-serif;color:#aca899;white-space:pre;">Pattern</div>
<div style="position:absolute;left:925px;top:692px;width:96px;height:28px;box-sizing:border-box;border-top:1px solid #fff;border-left:1px solid #fff;border-right:1px solid #716f64;border-bottom:1px solid #716f64;background:#ECE9D8"><div style="width:94px;height:26px;box-sizing:border-box;border-right:1px solid #aca899;border-bottom:1px solid #aca899"></div></div>
<div style="position:absolute;left:925.0px;top:699px;width:96px;text-align:center;font-size:11px;line-height:14px;color:#000;white-space:pre;"><u>S</u>top</div>
<div style="position:absolute;left:36px;top:723px;font-size:11px;line-height:14px;font-family:'Liberation Sans', sans-serif;color:#000;white-space:pre;">T = 25.6</div>
<div style="position:absolute;left:0px;top:722px;width:127px;height:16px;box-sizing:border-box;border-top:1px solid #aca899;border-left:1px solid #aca899;border-right:1px solid #fff;border-bottom:1px solid #fff"></div>
<div style="position:absolute;left:0.0px;top:723px;width:127px;text-align:center;font-size:11px;line-height:14px;color:#000;white-space:pre;"></div>
<div style="position:absolute;left:130px;top:722px;width:125px;height:16px;box-sizing:border-box;border-top:1px solid #aca899;border-left:1px solid #aca899;border-right:1px solid #fff;border-bottom:1px solid #fff"></div>
<div style="position:absolute;left:130.0px;top:723px;width:125px;text-align:center;font-size:11px;line-height:14px;color:#000;white-space:pre;">p = 1000 mbar</div>
<div style="position:absolute;left:258px;top:722px;width:125px;height:16px;box-sizing:border-box;border-top:1px solid #aca899;border-left:1px solid #aca899;border-right:1px solid #fff;border-bottom:1px solid #fff"></div>
<div style="position:absolute;left:258.0px;top:723px;width:125px;text-align:center;font-size:11px;line-height:14px;color:#000;white-space:pre;">Link Off</div>
<div style="position:absolute;left:386px;top:722px;width:125px;height:16px;box-sizing:border-box;border-top:1px solid #aca899;border-left:1px solid #aca899;border-right:1px solid #fff;border-bottom:1px solid #fff"></div>
<div style="position:absolute;left:386.0px;top:723px;width:125px;text-align:center;font-size:11px;line-height:14px;color:#000;white-space:pre;">Signal Channel</div>
<div style="position:absolute;left:514px;top:722px;width:510px;height:16px;box-sizing:border-box;border-top:1px solid #aca899;border-left:1px solid #aca899;border-right:1px solid #fff;border-bottom:1px solid #fff"></div>
<div style="position:absolute;left:514.0px;top:723px;width:510px;text-align:center;font-size:11px;line-height:14px;color:#000;white-space:pre;">Measurement</div>
<svg style="position:absolute;left:79px;top:724px" width="12" height="11" viewBox="0 0 12 11"><g stroke="#000" stroke-width="1" fill="none" shape-rendering="crispEdges"><path d="M5.5 0.5 V1.5 M2.5 1.5 H11.5 M2.5 1.5 V6 L1 10.5 M0.5 3.5 L1.5 4.5 M0.5 6.5 L1.5 5.5 M4 2.5 L5.5 4 M8 2.5 L6.5 4 M9 2.5 L11 4.5 M4.5 4.5 H10.5 M5 5.5 V7.5 H8 M9.5 5.5 L8.5 7.5 M10.5 6 L11.5 7 M4 8.5 L6 10.5 M6 8.5 L4 10.5 M8 8.5 L11 10.5 M11 8.5 L8 10.5 M7.5 7.5 V10.5"/></g></svg>
<div style="position:absolute;left:0px;top:738px;width:1024px;height:4px;background:linear-gradient(to bottom,#1f4fb6 0%,#2f7df0 40%,#2a6fe8 100%)"></div>
<div style="position:absolute;left:0px;top:738px;width:95px;height:4px;background:linear-gradient(to bottom,#3a7a3a 0%,#5cb45c 40%,#50a850 100%)"></div>
<div style="position:absolute;left:947px;top:738px;width:77px;height:4px;background:linear-gradient(to bottom,#0a5fc0 0%,#18a4f4 40%,#14a0f0 100%)"></div>
<div style="position:absolute;left:946px;top:738px;width:1px;height:4px;background:#0a3f90"></div>
</body></html>
